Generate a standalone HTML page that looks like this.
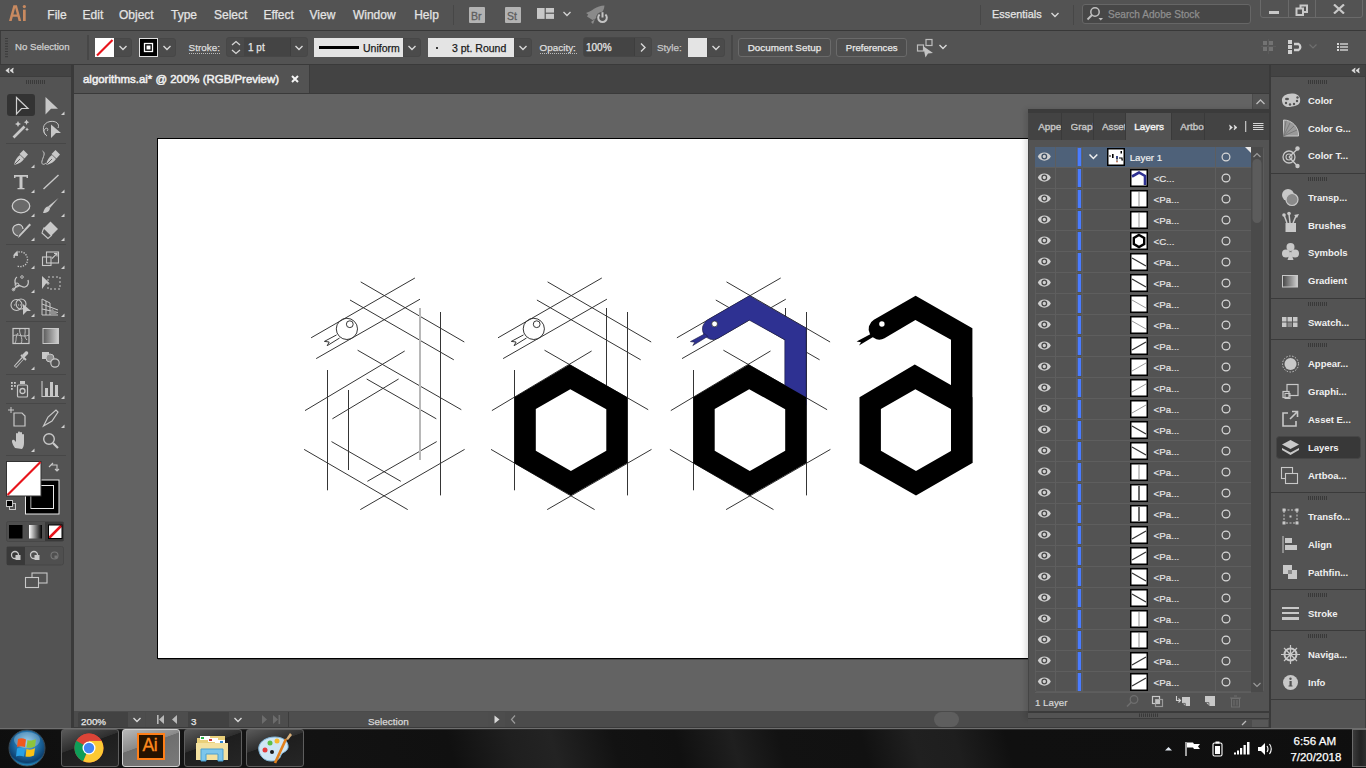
<!DOCTYPE html>
<html><head><meta charset="utf-8">
<style>
*{margin:0;padding:0;box-sizing:border-box}
html,body{width:1366px;height:768px;overflow:hidden;background:#535353;font-family:"Liberation Sans",sans-serif;color:#e0e0e0}
.a{position:absolute}
.t{position:absolute;white-space:nowrap}
</style></head><body>
<div class="a" style="left:0px;top:0px;width:1366px;height:30px;background:#535353;"></div>
<div class="a" style="left:0px;top:30px;width:1366px;height:1px;background:#383838;"></div>
<div class="a" style="left:0px;top:31px;width:1366px;height:33px;background:#535353;"></div>
<div class="a" style="left:0px;top:31px;width:1px;height:697px;background:#3c3c3c;"></div>
<div class="a" style="left:0px;top:64px;width:1366px;height:1px;background:#3a3a3a;"></div>
<div class="a" style="left:0px;top:65px;width:71px;height:663px;background:#535353;"></div>
<div class="a" style="left:0px;top:65px;width:71px;height:11px;background:#434343;"></div>
<div class="a" style="left:0px;top:76px;width:71px;height:1px;background:#3d3d3d;"></div>
<div class="a" style="left:71px;top:65px;width:3px;height:663px;background:#3a3a3a;"></div>
<div class="a" style="left:74px;top:65px;width:1195px;height:28px;background:#434343;"></div>
<div class="a" style="left:74px;top:65px;width:235px;height:28px;background:#535353;"></div>
<div class="a" style="left:309px;top:65px;width:1px;height:28px;background:#3c3c3c;"></div>
<div class="a" style="left:74px;top:93px;width:1195px;height:1px;background:#3a3a3a;"></div>
<div class="a" style="left:74px;top:94px;width:1195px;height:617px;background:#636363;"></div>
<div class="a" style="left:1252px;top:94px;width:17px;height:617px;background:#535353;"></div>
<div class="a" style="left:157px;top:138px;width:873px;height:521px;background:#fff;border:1px solid #000;box-shadow:1px 1px 0 rgba(0,0,0,0.25)"></div>
<svg class="a" style="left:0px;top:0px;" width="1366" height="768" viewBox="0 0 1366 768"><g fill="none" stroke="#353535" stroke-width="1"><path d="M311.1 337.8L414.9 278.0 M316.2 358.6L420.0 299.2 M360.7 281.9L464.3 342.0 M350.0 300.0L453.8 359.8 M440.5 312.0L440.5 495.4 M357.6 350.2L461.3 409.7 M305.0 410.6L404.7 351.0 M327.5 370.0L327.5 490.3 M304.1 449.4L407.7 509.6 M360.3 509.6L464.6 449.4 M366.7 379.0L436.3 418.8 M332.4 418.8L398.6 379.0 M348.5 390.0L348.5 470.0 M331.5 441.6L400.8 481.3 M367.4 481.3L436.7 441.6"/><path d="M420 308V460" stroke="#b8b8b8" stroke-width="2"/><circle cx="346.9" cy="328.9" r="10.6"/><circle cx="349.8" cy="324.2" r="3.4"/><path d="M336.6 334.9 L324.4 341.4 L329.2 342.0 L327.2 345.7 L339.6 338.0"/><path d="M498.0 337.8L601.8 278.0 M503.1 358.6L606.9 299.2 M547.6 281.9L651.2 342.0 M536.9 300.0L640.7 359.8 M627.5 312.0L627.5 495.4 M544.5 350.2L648.2 409.7 M491.9 410.6L591.6 351.0 M514.5 370.0L514.5 490.3 M491.0 449.4L594.6 509.6 M547.2 509.6L651.5 449.4 M606.5 308.0L606.5 390.0"/><circle cx="533.8" cy="328.9" r="10.6"/><circle cx="536.7" cy="324.2" r="3.4"/><path d="M523.5 334.9 L511.3 341.4 L516.1 342.0 L514.1 345.7 L526.5 338.0"/><path d="M676.9 337.8L780.7 278.0 M682.0 358.6L785.8 299.2 M726.5 281.9L830.1 342.0 M715.8 300.0L819.6 359.8 M806.5 312.0L806.5 495.4 M723.4 350.2L827.1 409.7 M670.8 410.6L770.5 351.0 M693.5 370.0L693.5 490.3 M669.9 449.4L773.5 509.6 M726.1 509.6L830.4 449.4 M785.5 308.0L785.5 340.0"/></g><path d="M569.7 364.4 L627.3 397.2 L627.3 462.9 L570.9 495.5 L514.4 463.2 L514.4 397.2ZM570.3 389.2 L606.3 409.3 L606.3 450.7 L570.9 471.1 L535.8 450.7 L535.8 409.0Z" fill="#000" fill-rule="evenodd"/><path d="M707.7 319.8 L749.4 295.8 L806.2 328.2 L806.2 405.0 L784.8 405.0 L784.8 339.7 L749.2 320.1 L718.3 338.2 A10.6 10.6 0 0 1 707.7 319.8Z" fill="#2e3192" stroke="#1a1a40" stroke-width="0.6"/><path d="M705.0 333.7 L690.4 341.6 L694.8 342.2 L692.8 345.6 L707.7 336.4Z" fill="#2e3192" stroke="#1a1a40" stroke-width="0.6"/><circle cx="714.6" cy="323.9" r="2.9" fill="#fff" stroke="#222" stroke-width="0.7"/><path d="M748.6 364.4 L806.2 397.2 L806.2 462.9 L749.8 495.5 L693.3 463.2 L693.3 397.2ZM749.2 389.2 L785.2 409.3 L785.2 450.7 L749.8 471.1 L714.7 450.7 L714.7 409.0Z" fill="#000" fill-rule="evenodd"/><path d="M873.9 319.8 L915.6 295.8 L972.4 328.2 L972.4 462.9 L951.0 462.9 L951.0 339.7 L915.4 320.1 L884.5 338.2 A10.6 10.6 0 0 1 873.9 319.8Z" fill="#000"/><path d="M871.2 333.7 L856.6 341.6 L861.0 342.2 L859.0 345.6 L873.9 336.4Z" fill="#000"/><path d="M914.8 364.4 L972.4 397.2 L972.4 462.9 L916.0 495.5 L859.5 463.2 L859.5 397.2ZM915.4 389.2 L951.4 409.3 L951.4 450.7 L916.0 471.1 L880.9 450.7 L880.9 409.0Z" fill="#000" fill-rule="evenodd"/><circle cx="881.9" cy="324" r="2.7" fill="#fff"/></svg>
<div class="a" style="left:74px;top:711px;width:1195px;height:17px;background:#535353;"></div>
<div class="a" style="left:1269px;top:65px;width:2px;height:663px;background:#3a3a3a;"></div>
<div class="a" style="left:1271px;top:65px;width:95px;height:663px;background:#535353;"></div>
<div class="a" style="left:1271px;top:65px;width:95px;height:11px;background:#434343;"></div>
<div class="a" style="left:1271px;top:76px;width:95px;height:1px;background:#3d3d3d;"></div>
<div class="a" style="left:1365px;top:65px;width:1px;height:663px;background:#3f3f3f;"></div>
<svg class="a" style="left:0px;top:0px;" width="30" height="30" viewBox="0 0 30 30"><path fill-rule="evenodd" d="M9 21 L13.4 5.2 L16.9 5.2 L21.2 21 L18.6 21 L17.5 16.8 L12.8 16.8 L11.7 21Z M13.4 14.5 L16.9 14.5 L15.15 7.8Z" fill="#c98a60"/><rect x="23" y="9.6" width="2.7" height="11.4" fill="#c98a60"/><circle cx="24.35" cy="6.6" r="1.6" fill="#c98a60"/></svg>
<div class="t" style="left:47.3px;top:8.84px;font-size:12px;line-height:12px;color:#e4e4e4;font-weight:normal;-webkit-text-stroke:0.25px #e4e4e4;">File</div>
<div class="t" style="left:82.6px;top:8.84px;font-size:12px;line-height:12px;color:#e4e4e4;font-weight:normal;-webkit-text-stroke:0.25px #e4e4e4;">Edit</div>
<div class="t" style="left:119px;top:8.84px;font-size:12px;line-height:12px;color:#e4e4e4;font-weight:normal;-webkit-text-stroke:0.25px #e4e4e4;">Object</div>
<div class="t" style="left:171px;top:8.84px;font-size:12px;line-height:12px;color:#e4e4e4;font-weight:normal;-webkit-text-stroke:0.25px #e4e4e4;">Type</div>
<div class="t" style="left:214px;top:8.84px;font-size:12px;line-height:12px;color:#e4e4e4;font-weight:normal;-webkit-text-stroke:0.25px #e4e4e4;">Select</div>
<div class="t" style="left:263.4px;top:8.84px;font-size:12px;line-height:12px;color:#e4e4e4;font-weight:normal;-webkit-text-stroke:0.25px #e4e4e4;">Effect</div>
<div class="t" style="left:309.5px;top:8.84px;font-size:12px;line-height:12px;color:#e4e4e4;font-weight:normal;-webkit-text-stroke:0.25px #e4e4e4;">View</div>
<div class="t" style="left:352.9px;top:8.84px;font-size:12px;line-height:12px;color:#e4e4e4;font-weight:normal;-webkit-text-stroke:0.25px #e4e4e4;">Window</div>
<div class="t" style="left:414.2px;top:8.84px;font-size:12px;line-height:12px;color:#e4e4e4;font-weight:normal;-webkit-text-stroke:0.25px #e4e4e4;">Help</div>
<div class="a" style="left:453px;top:5px;width:1px;height:20px;background:#474747;"></div>
<div class="a" style="left:469px;top:7px;width:16px;height:16px;background:#b3b3b3;border-radius:1px"></div>
<div class="t" style="left:471px;top:10.61px;font-size:10.5px;line-height:10.5px;color:#5e5e5e;font-weight:normal;-webkit-text-stroke:0.3px #5e5e5e">Br</div>
<div class="a" style="left:505px;top:7px;width:16px;height:16px;background:#b3b3b3;border-radius:1px"></div>
<div class="t" style="left:507px;top:10.61px;font-size:10.5px;line-height:10.5px;color:#5e5e5e;font-weight:normal;-webkit-text-stroke:0.3px #5e5e5e">St</div>
<svg class="a" style="left:537px;top:8px;" width="18" height="12" viewBox="0 0 18 12"><rect x="0" y="0" width="7.6" height="10.9" fill="#c8c8c8"/><rect x="8.8" y="0" width="8.2" height="4.6" fill="#c8c8c8"/><rect x="8.8" y="5.8" width="8.2" height="5.1" fill="#c8c8c8"/></svg>
<svg class="a" style="left:561.5px;top:10px;" width="10" height="8" viewBox="0 0 10 8"><path d="M1.5 2 L5 5.5 L8.5 2" fill="none" stroke="#d0d0d0" stroke-width="1.4"/></svg>
<svg class="a" style="left:584px;top:2px;" width="26" height="26" viewBox="0 0 26 26"><path d="M3 14.5 C6 8 13 4 20.5 3.5 C20 10 15 15.5 8.5 18 Z" fill="#8a8a8a"/><path d="M2 11 L8 8.5 L5 13Z M7 20 L11 17 L9 22Z" fill="#8a8a8a"/><circle cx="18.5" cy="16" r="6.3" fill="#535353"/><path d="M15.6 12.6 A4.3 4.3 0 1 0 21.4 12.6" fill="none" stroke="#c4c4c4" stroke-width="2"/><path d="M18.5 10.2 V15.5" stroke="#c4c4c4" stroke-width="2"/></svg>
<div class="a" style="left:980px;top:5px;width:1px;height:20px;background:#474747;"></div>
<div class="t" style="left:992px;top:9.27px;font-size:10.9px;line-height:10.9px;color:#e4e4e4;font-weight:normal;-webkit-text-stroke:0.25px #e4e4e4;">Essentials</div>
<svg class="a" style="left:1050px;top:11px;" width="10" height="8" viewBox="0 0 10 8"><path d="M1.5 2 L5 5.5 L8.5 2" fill="none" stroke="#d8d8d8" stroke-width="1.4"/></svg>
<div class="a" style="left:1073px;top:5px;width:1px;height:20px;background:#474747;"></div>
<div class="a" style="left:1082px;top:4px;width:169px;height:20px;background:#474747;border:1px solid #666;border-radius:3px"></div>
<svg class="a" style="left:1086px;top:6px;" width="18" height="16" viewBox="0 0 18 16"><circle cx="9" cy="6" r="4.2" fill="none" stroke="#c0c0c0" stroke-width="1.5"/><path d="M6 9 L1.5 13.5" stroke="#c0c0c0" stroke-width="1.8"/><path d="M12.5 12 L17 12 L14.75 14.5Z" fill="#c0c0c0"/></svg>
<div class="t" style="left:1108px;top:9.75px;font-size:10.1px;line-height:10.1px;color:#8f8f8f;font-weight:normal;-webkit-text-stroke:0.25px #8f8f8f;">Search Adobe Stock</div>
<div class="a" style="left:1260px;top:-3px;width:103px;height:21px;background:transparent;border:1px solid #6a6a6a;border-radius:3px"></div>
<div class="a" style="left:1288px;top:0px;width:1px;height:18px;background:#6a6a6a;"></div>
<div class="a" style="left:1315px;top:0px;width:1px;height:18px;background:#6a6a6a;"></div>
<div class="a" style="left:1269px;top:11px;width:10px;height:3px;background:#c8c8c8;"></div>
<svg class="a" style="left:1295px;top:4px;" width="14" height="12" viewBox="0 0 14 12"><rect x="5.5" y="1.5" width="6.5" height="6.5" fill="none" stroke="#c8c8c8" stroke-width="2"/><rect x="1.5" y="4.5" width="6.5" height="6.5" fill="#535353" stroke="#c8c8c8" stroke-width="2"/></svg>
<svg class="a" style="left:1333px;top:4px;" width="12" height="10" viewBox="0 0 12 10"><path d="M1 0.5 L11 9.5 M11 0.5 L1 9.5" stroke="#c8c8c8" stroke-width="2.2"/></svg>
<svg class="a" style="left:5px;top:38px;" width="4" height="20" viewBox="0 0 4 20"><rect x="0" y="0.0" width="3" height="1" fill="#3a3a3a"/><rect x="0" y="2.6" width="3" height="1" fill="#3a3a3a"/><rect x="0" y="5.2" width="3" height="1" fill="#3a3a3a"/><rect x="0" y="7.800000000000001" width="3" height="1" fill="#3a3a3a"/><rect x="0" y="10.4" width="3" height="1" fill="#3a3a3a"/><rect x="0" y="13.0" width="3" height="1" fill="#3a3a3a"/><rect x="0" y="15.600000000000001" width="3" height="1" fill="#3a3a3a"/><rect x="0" y="18.2" width="3" height="1" fill="#3a3a3a"/></svg>
<div class="t" style="left:15px;top:42.03px;font-size:9.65px;line-height:9.65px;color:#d0d0d0;font-weight:normal;-webkit-text-stroke:0.25px #d0d0d0;">No Selection</div>
<div class="a" style="left:87px;top:35px;width:2px;height:25px;background:#474747;"></div>
<div class="a" style="left:95px;top:38px;width:19px;height:19px;background:#fff;"></div>
<svg class="a" style="left:95px;top:38px;" width="19" height="19" viewBox="0 0 19 19"><path d="M2 17.5 L17.5 2" stroke="#e8141b" stroke-width="2.2"/></svg>
<div class="a" style="left:114px;top:38px;width:18px;height:19px;background:#4b4b4b;border:1px solid #474747;border-radius:0 3px 3px 0"></div>
<svg class="a" style="left:118px;top:43.5px;" width="10" height="8" viewBox="0 0 10 8"><path d="M1.5 2 L5 5.5 L8.5 2" fill="none" stroke="#d8d8d8" stroke-width="1.4"/></svg>
<div class="a" style="left:139px;top:38px;width:19px;height:19px;background:#000;border:1px solid #e0e0e0"></div>
<svg class="a" style="left:139px;top:38px;" width="19" height="19" viewBox="0 0 19 19"><rect x="5.5" y="5.5" width="8" height="8" fill="none" stroke="#fff" stroke-width="1.3"/><rect x="7.5" y="7.5" width="4" height="4" fill="#fff"/></svg>
<div class="a" style="left:158px;top:38px;width:18px;height:19px;background:#4b4b4b;border:1px solid #474747;border-radius:0 3px 3px 0"></div>
<svg class="a" style="left:162px;top:43.5px;" width="10" height="8" viewBox="0 0 10 8"><path d="M1.5 2 L5 5.5 L8.5 2" fill="none" stroke="#d8d8d8" stroke-width="1.4"/></svg>
<div class="t" style="left:188.6px;top:42.62px;font-size:9.9px;line-height:9.9px;color:#dedede;font-weight:normal;-webkit-text-stroke:0.25px #dedede;">Stroke:</div>
<svg class="a" style="left:189px;top:53px;" width="32" height="2" viewBox="0 0 32 2"><rect x="0" y="0" width="1" height="1" fill="#bbbbbb"/><rect x="2" y="0" width="1" height="1" fill="#bbbbbb"/><rect x="4" y="0" width="1" height="1" fill="#bbbbbb"/><rect x="6" y="0" width="1" height="1" fill="#bbbbbb"/><rect x="8" y="0" width="1" height="1" fill="#bbbbbb"/><rect x="10" y="0" width="1" height="1" fill="#bbbbbb"/><rect x="12" y="0" width="1" height="1" fill="#bbbbbb"/><rect x="14" y="0" width="1" height="1" fill="#bbbbbb"/><rect x="16" y="0" width="1" height="1" fill="#bbbbbb"/><rect x="18" y="0" width="1" height="1" fill="#bbbbbb"/><rect x="20" y="0" width="1" height="1" fill="#bbbbbb"/><rect x="22" y="0" width="1" height="1" fill="#bbbbbb"/><rect x="24" y="0" width="1" height="1" fill="#bbbbbb"/><rect x="26" y="0" width="1" height="1" fill="#bbbbbb"/><rect x="28" y="0" width="1" height="1" fill="#bbbbbb"/><rect x="30" y="0" width="1" height="1" fill="#bbbbbb"/></svg>
<div class="a" style="left:226px;top:37px;width:82px;height:20px;background:#4a4a4a;border:1px solid #474747;border-radius:3px"></div>
<svg class="a" style="left:229px;top:39px;" width="14" height="17" viewBox="0 0 14 17"><path d="M3 6 L7 2.5 L11 6 M3 11 L7 14.5 L11 11" fill="none" stroke="#d6d6d6" stroke-width="1.3"/></svg>
<div class="a" style="left:244px;top:38px;width:46px;height:18px;background:#444444;"></div>
<div class="t" style="left:248px;top:42.53px;font-size:10px;line-height:10px;color:#e6e6e6;font-weight:normal;-webkit-text-stroke:0.25px #e6e6e6;">1 pt</div>
<div class="a" style="left:290px;top:38px;width:1px;height:18px;background:#3e3e3e;"></div>
<svg class="a" style="left:294px;top:43.5px;" width="10" height="8" viewBox="0 0 10 8"><path d="M1.5 2 L5 5.5 L8.5 2" fill="none" stroke="#d8d8d8" stroke-width="1.4"/></svg>
<div class="a" style="left:314px;top:38px;width:89px;height:19px;background:#e4e4e4;"></div>
<div class="a" style="left:319px;top:46px;width:40px;height:3px;background:#000;"></div>
<div class="t" style="left:363px;top:42.61px;font-size:10.5px;line-height:10.5px;color:#1a1a1a;font-weight:normal;-webkit-text-stroke:0.25px #1a1a1a;">Uniform</div>
<div class="a" style="left:403px;top:38px;width:18px;height:19px;background:#4b4b4b;border:1px solid #474747;border-radius:0 3px 3px 0"></div>
<svg class="a" style="left:407px;top:43.5px;" width="10" height="8" viewBox="0 0 10 8"><path d="M1.5 2 L5 5.5 L8.5 2" fill="none" stroke="#d8d8d8" stroke-width="1.4"/></svg>
<div class="a" style="left:428px;top:38px;width:86px;height:19px;background:#e4e4e4;"></div>
<div class="a" style="left:436px;top:46.5px;width:2.2px;height:2.2px;background:#000;border-radius:50%"></div>
<div class="t" style="left:452px;top:42.61px;font-size:10.5px;line-height:10.5px;color:#1a1a1a;font-weight:normal;-webkit-text-stroke:0.25px #1a1a1a;">3 pt. Round</div>
<div class="a" style="left:514px;top:38px;width:18px;height:19px;background:#4b4b4b;border:1px solid #474747;border-radius:0 3px 3px 0"></div>
<svg class="a" style="left:518px;top:43.5px;" width="10" height="8" viewBox="0 0 10 8"><path d="M1.5 2 L5 5.5 L8.5 2" fill="none" stroke="#d8d8d8" stroke-width="1.4"/></svg>
<div class="t" style="left:539.6px;top:42.62px;font-size:9.9px;line-height:9.9px;color:#dedede;font-weight:normal;-webkit-text-stroke:0.25px #dedede;">Opacity:</div>
<svg class="a" style="left:540px;top:53px;" width="38" height="2" viewBox="0 0 38 2"><rect x="0" y="0" width="1" height="1" fill="#bbbbbb"/><rect x="2" y="0" width="1" height="1" fill="#bbbbbb"/><rect x="4" y="0" width="1" height="1" fill="#bbbbbb"/><rect x="6" y="0" width="1" height="1" fill="#bbbbbb"/><rect x="8" y="0" width="1" height="1" fill="#bbbbbb"/><rect x="10" y="0" width="1" height="1" fill="#bbbbbb"/><rect x="12" y="0" width="1" height="1" fill="#bbbbbb"/><rect x="14" y="0" width="1" height="1" fill="#bbbbbb"/><rect x="16" y="0" width="1" height="1" fill="#bbbbbb"/><rect x="18" y="0" width="1" height="1" fill="#bbbbbb"/><rect x="20" y="0" width="1" height="1" fill="#bbbbbb"/><rect x="22" y="0" width="1" height="1" fill="#bbbbbb"/><rect x="24" y="0" width="1" height="1" fill="#bbbbbb"/><rect x="26" y="0" width="1" height="1" fill="#bbbbbb"/><rect x="28" y="0" width="1" height="1" fill="#bbbbbb"/><rect x="30" y="0" width="1" height="1" fill="#bbbbbb"/><rect x="32" y="0" width="1" height="1" fill="#bbbbbb"/><rect x="34" y="0" width="1" height="1" fill="#bbbbbb"/><rect x="36" y="0" width="1" height="1" fill="#bbbbbb"/></svg>
<div class="a" style="left:583px;top:37px;width:69px;height:20px;background:#4a4a4a;border:1px solid #474747;border-radius:3px"></div>
<div class="a" style="left:584px;top:38px;width:50px;height:18px;background:#444444;"></div>
<div class="t" style="left:586px;top:42.53px;font-size:10px;line-height:10px;color:#e6e6e6;font-weight:normal;-webkit-text-stroke:0.25px #e6e6e6;">100%</div>
<div class="a" style="left:634px;top:38px;width:1px;height:18px;background:#3e3e3e;"></div>
<svg class="a" style="left:638px;top:42px;" width="10" height="11" viewBox="0 0 10 11"><path d="M3 1.5 L7 5.5 L3 9.5" fill="none" stroke="#d8d8d8" stroke-width="1.4"/></svg>
<div class="t" style="left:657px;top:42.62px;font-size:9.9px;line-height:9.9px;color:#c8c8c8;font-weight:normal;-webkit-text-stroke:0.25px #c8c8c8;">Style:</div>
<div class="a" style="left:688px;top:38px;width:19px;height:19px;background:#e4e4e4;"></div>
<div class="a" style="left:707px;top:38px;width:18px;height:19px;background:#4b4b4b;border:1px solid #474747;border-radius:0 3px 3px 0"></div>
<svg class="a" style="left:711px;top:43.5px;" width="10" height="8" viewBox="0 0 10 8"><path d="M1.5 2 L5 5.5 L8.5 2" fill="none" stroke="#d8d8d8" stroke-width="1.4"/></svg>
<div class="a" style="left:731px;top:35px;width:2px;height:25px;background:#474747;"></div>
<div class="a" style="left:738px;top:38px;width:93px;height:19px;background:#4e4e4e;border:1px solid #6a6a6a;border-radius:3px"></div>
<div class="t" style="left:747.7px;top:43.15px;font-size:9.87px;line-height:9.87px;color:#e8e8e8;font-weight:normal;-webkit-text-stroke:0.25px #e8e8e8;">Document Setup</div>
<div class="a" style="left:836px;top:38px;width:71px;height:19px;background:#4e4e4e;border:1px solid #6a6a6a;border-radius:3px"></div>
<div class="t" style="left:845.8px;top:43.37px;font-size:9.6px;line-height:9.6px;color:#e8e8e8;font-weight:normal;-webkit-text-stroke:0.25px #e8e8e8;">Preferences</div>
<svg class="a" style="left:916px;top:38px;" width="20" height="20" viewBox="0 0 20 20"><rect x="1.5" y="7" width="6" height="6" fill="none" stroke="#bdbdbd" stroke-width="1.2"/><rect x="10" y="1.5" width="6" height="6" fill="none" stroke="#bdbdbd" stroke-width="1.2"/><path d="M7 8 L17 15 L12 15.5 L9.5 19.5 Z" fill="#c4c4c4"/></svg>
<svg class="a" style="left:938px;top:43px;" width="10" height="8" viewBox="0 0 10 8"><path d="M1.5 2 L5 5.5 L8.5 2" fill="none" stroke="#d8d8d8" stroke-width="1.4"/></svg>
<svg class="a" style="left:1260px;top:38px;" width="18" height="18" viewBox="0 0 18 18"><g fill="#737373"><rect x="3" y="3" width="4" height="4"/><rect x="9" y="3" width="4" height="4"/><rect x="3" y="9" width="4" height="4"/><rect x="9" y="9" width="4" height="4"/></g><path d="M8.5 1V16 M1 8.5H16" stroke="#5e5e5e" stroke-width="0.8"/></svg>
<svg class="a" style="left:1286px;top:38px;" width="20" height="18" viewBox="0 0 20 18"><g fill="#d0d0d0"><rect x="2" y="2" width="4" height="4"/><rect x="2" y="7" width="4" height="4"/><rect x="2" y="12" width="4" height="4"/></g><path d="M8 6 H12.5 A3.4 3.4 0 0 1 12.5 12 H8" fill="none" stroke="#d0d0d0" stroke-width="2.4"/></svg>
<svg class="a" style="left:1308px;top:42px;" width="10" height="8" viewBox="0 0 10 8"><path d="M1.5 2.5 L5 6 L8.5 2.5" fill="none" stroke="#6f6f6f" stroke-width="1.2"/></svg>
<svg class="a" style="left:1335px;top:41px;" width="16" height="12" viewBox="0 0 16 12"><g fill="#d6d6d6"><rect x="2" y="2" width="2" height="2"/><rect x="5" y="2.3" width="8" height="1.4"/><rect x="2" y="5" width="2" height="2"/><rect x="5" y="5.3" width="8" height="1.4"/><rect x="2" y="8" width="2" height="2"/><rect x="5" y="8.3" width="8" height="1.4"/></g></svg>
<svg class="a" style="left:0px;top:0px;" width="72" height="600" viewBox="0 0 72 600"><path d="M9.2 68 L5.8 70.5 L9.2 73 L8.6 70.5Z M13.3 68 L9.9 70.5 L13.3 73 L12.7 70.5Z" fill="#e0e0e0" stroke="#e0e0e0" stroke-width="0.6" stroke-linejoin="round"/><rect x="26" y="80" width="1" height="4" fill="#3a3a3a"/><rect x="28" y="80" width="1" height="4" fill="#3a3a3a"/><rect x="30" y="80" width="1" height="4" fill="#3a3a3a"/><rect x="32" y="80" width="1" height="4" fill="#3a3a3a"/><rect x="34" y="80" width="1" height="4" fill="#3a3a3a"/><rect x="36" y="80" width="1" height="4" fill="#3a3a3a"/><rect x="38" y="80" width="1" height="4" fill="#3a3a3a"/><rect x="40" y="80" width="1" height="4" fill="#3a3a3a"/><rect x="42" y="80" width="1" height="4" fill="#3a3a3a"/><rect x="44" y="80" width="1" height="4" fill="#3a3a3a"/><rect x="7" y="94" width="28" height="22" rx="3" fill="#333333"/><path d="M16.5 97.5 L28 108.5 L21.5 108.5 L16.5 114 Z" fill="none" stroke="#d0d0d0" stroke-width="1.2"/><path d="M45.5 97 L58 108.7 L51 108.7 L45.5 114.5 Z" fill="#c8c8c8"/><path d="M61 115 L64.5 115 L64.5 111.5Z" fill="#d0d0d0"/><path d="M13.5 137.5 L24.5 126.5" stroke="#c8c8c8" stroke-width="2.6"/><path d="M18 121 l1 2 l2 1 l-2 1 l-1 2 l-1 -2 l-2 -1 l2 -1z M26.5 119.5 l0.9 1.8 l1.8 0.9 l-1.8 0.9 l-0.9 1.8 l-0.9 -1.8 l-1.8 -0.9 l1.8 -0.9z M27 127.5 l0.7 1.2 l1.2 0.7 l-1.2 0.7 l-0.7 1.2 l-0.7 -1.2 l-1.2 -0.7 l1.2 -0.7z" fill="#c8c8c8"/><path d="M46 135 C42 131 42 123 50 121.5 C56 120.5 60 124 58 128 M47 136 C44 134 43 131 45 129 C47 127 49 129 47 131" fill="none" stroke="#c8c8c8" stroke-width="1"/><path d="M51 124.5 L61 133 L56 133 L51 138 Z" fill="#c8c8c8"/><rect x="6" y="143" width="60" height="1" fill="#474747"/><g transform="translate(21,158)"><path d="M-7 7 C-6 2 -4 -1 -1 -3 L3 1 C1 4 -2 6 -7 7Z" fill="#c8c8c8"/><path d="M-1.5 -4 L2.5 -8 L7 -3.5 L3.5 0.5Z" fill="#c8c8c8"/><path d="M-6.5 6.5 L-1 1" stroke="#535353" stroke-width="0.9"/></g><path d="M31 168 L34.5 168 L34.5 164.5Z" fill="#d0d0d0"/><g transform="translate(53,158)"><path d="M-7 7 C-6 2 -4 -1 -1 -3 L3 1 C1 4 -2 6 -7 7Z" fill="#c8c8c8"/><path d="M-1.5 -4 L2.5 -8 L7 -3.5 L3.5 0.5Z" fill="#c8c8c8"/><path d="M-6.5 6.5 L-1 1" stroke="#535353" stroke-width="0.9"/></g><path d="M42.5 151 C46 153 43 157 42 161 C41 165 44 165 46 163" fill="none" stroke="#c8c8c8" stroke-width="1"/><path d="M14 175 H28 V178 H26.5 V176.8 H22.5 V188 H24.5 V189.2 H17.5 V188 H19.5 V176.8 H15.5 V178 H14Z" fill="#c8c8c8"/><path d="M31 193 L34.5 193 L34.5 189.5Z" fill="#d0d0d0"/><path d="M43.5 189 L58.5 175" stroke="#c8c8c8" stroke-width="1.4"/><path d="M61 193 L64.5 193 L64.5 189.5Z" fill="#d0d0d0"/><ellipse cx="21" cy="206" rx="8.8" ry="6.8" fill="#6a6a6a" stroke="#d0d0d0" stroke-width="1.2"/><path d="M31 217 L34.5 217 L34.5 213.5Z" fill="#d0d0d0"/><path d="M58.5 198 L50 208 L48 206.5Z" fill="#c8c8c8"/><path d="M43 213 C44 210 45 207 48 206.5 L50 208 C50 211 47 213 43 213Z" fill="#c8c8c8"/><path d="M61 217 L64.5 217 L64.5 213.5Z" fill="#d0d0d0"/><path d="M18 236 C12 234 11 227 16 225 C20 223 23 226 23 229" fill="#6a6a6a" stroke="#d0d0d0" stroke-width="1.2"/><path d="M31 225 L20 236.5 L18 238 L19 235 L29.5 223.5Z" fill="#c8c8c8"/><path d="M31 241 L34.5 241 L34.5 237.5Z" fill="#d0d0d0"/><path d="M50.5 221.5 L58 229 L51.5 235.5 L44 228Z" fill="#c8c8c8"/><path d="M44 228 L51.5 235.5 L48 238.5 L42 233 L43 230Z" fill="none" stroke="#c8c8c8" stroke-width="1.1"/><path d="M61 241 L64.5 241 L64.5 237.5Z" fill="#d0d0d0"/><rect x="6" y="244" width="60" height="1" fill="#474747"/><path d="M16 253 C21 250 27 253 27.5 259 C28 265 22 268 17 266" fill="none" stroke="#c8c8c8" stroke-width="1.3" stroke-dasharray="1.3 1.3"/><path d="M13 255.5 L17.5 250.5 L18 256Z" fill="#c8c8c8"/><path d="M14 258 C14 256 15 254 16 253" stroke="#c8c8c8" stroke-width="1.3" fill="none"/><path d="M31 269 L34.5 269 L34.5 265.5Z" fill="#d0d0d0"/><rect x="42.5" y="257" width="8.5" height="8.5" fill="none" stroke="#c8c8c8" stroke-width="1.1"/><rect x="46.5" y="252" width="12" height="11" fill="none" stroke="#c8c8c8" stroke-width="1.1"/><path d="M52 258.5 L57 253.5 M54 253.5 H57 V256.5" fill="none" stroke="#c8c8c8" stroke-width="1.1"/><path d="M61 269 L64.5 269 L64.5 265.5Z" fill="#d0d0d0"/><path d="M13 290 L17 286 C20 284 22 288 25 287 C28 286 29 283 28 280 M16 285 C14 282 15 278 17 277" fill="none" stroke="#c8c8c8" stroke-width="1.3"/><circle cx="17" cy="285" r="2" fill="none" stroke="#c8c8c8" stroke-width="1"/><circle cx="13.5" cy="289.5" r="1.3" fill="none" stroke="#c8c8c8" stroke-width="0.9"/><circle cx="22" cy="277" r="1.3" fill="none" stroke="#c8c8c8" stroke-width="0.9"/><path d="M31 293 L34.5 293 L34.5 289.5Z" fill="#d0d0d0"/><path d="M42 276 L50 283.5 L46 283.5 L42 289Z" fill="#c8c8c8"/><rect x="48" y="277" width="12" height="12" fill="none" stroke="#c8c8c8" stroke-width="1" stroke-dasharray="2 2"/><circle cx="16.5" cy="305" r="5.5" fill="none" stroke="#c8c8c8" stroke-width="1.1"/><circle cx="21" cy="304" r="5" fill="none" stroke="#c8c8c8" stroke-width="1.1"/><path d="M14 305 H22" stroke="#c8c8c8" stroke-width="1" stroke-dasharray="1 1"/><path d="M23 304 L31 311 L27 311 L23 315Z" fill="#c8c8c8"/><path d="M31 317 L34.5 317 L34.5 313.5Z" fill="#d0d0d0"/><path d="M42 299 V315 L58 315 M42 299 L50 303 V315 M42 304 L58 310 M42 309 L58 312.5 M46 301 V315" fill="none" stroke="#c8c8c8" stroke-width="1"/><path d="M52 308 L57 314 H50Z" fill="#8f8f8f"/><path d="M61 317 L64.5 317 L64.5 313.5Z" fill="#d0d0d0"/><rect x="6" y="321" width="60" height="1" fill="#474747"/><rect x="13" y="328.5" width="16" height="15" fill="none" stroke="#c8c8c8" stroke-width="1.2"/><path d="M13 336 C18 333 22 338 29 335 M20 328.5 C18 333 24 338 21 343.5 M15 343 C17 340 15 337 18 333 M25 329 C26 333 23 336 27 340" fill="none" stroke="#c8c8c8" stroke-width="0.9"/><defs><linearGradient id="gg" x1="0" x2="1"><stop offset="0" stop-color="#5a5a5a"/><stop offset="1" stop-color="#d0d0d0"/></linearGradient></defs><rect x="43" y="328.5" width="15.5" height="15" fill="url(#gg)" stroke="#c8c8c8" stroke-width="1"/><path d="M15 367 L23 358" stroke="#c8c8c8" stroke-width="3.2"/><path d="M15.5 366.5 L23 358.5" stroke="#535353" stroke-width="1.2"/><path d="M22 355 L25.5 351.5 C27 350.5 29 352 28 354 L24.5 357.5Z" fill="#c8c8c8"/><path d="M21 355 L26 360" stroke="#c8c8c8" stroke-width="1.8"/><path d="M31 370 L34.5 370 L34.5 366.5Z" fill="#d0d0d0"/><rect x="42" y="352" width="7" height="7" fill="#c8c8c8"/><circle cx="50" cy="358" r="4" fill="#8f8f8f" stroke="#c8c8c8" stroke-width="1"/><circle cx="55" cy="363" r="4.2" fill="#535353" stroke="#c8c8c8" stroke-width="1.2"/><rect x="6" y="374" width="60" height="1" fill="#474747"/><g fill="#c8c8c8"><rect x="11" y="382" width="1.8" height="1.8"/><rect x="14" y="382" width="1.8" height="1.8"/><rect x="11" y="385" width="1.8" height="1.8"/><rect x="14" y="385" width="1.8" height="1.8"/><rect x="11" y="388" width="1.8" height="1.8"/><rect x="20" y="381" width="5" height="3"/></g><rect x="17.5" y="385" width="10" height="12" rx="1" fill="none" stroke="#c8c8c8" stroke-width="1.2"/><circle cx="22.5" cy="391" r="2.5" fill="none" stroke="#c8c8c8" stroke-width="1.3"/><path d="M31 399 L34.5 399 L34.5 395.5Z" fill="#d0d0d0"/><path d="M42 381 V396.5 H59" fill="none" stroke="#c8c8c8" stroke-width="1.1"/><g fill="#c8c8c8"><rect x="45" y="388" width="3" height="8"/><rect x="50" y="382" width="3" height="14"/><rect x="55" y="385" width="3" height="11"/></g><path d="M61 399 L64.5 399 L64.5 395.5Z" fill="#d0d0d0"/><rect x="6" y="403" width="60" height="1" fill="#474747"/><path d="M8 410 H14 M11 407 V413" stroke="#c8c8c8" stroke-width="1"/><path d="M14 413 H22 L25 416 V426 H14Z" fill="none" stroke="#c8c8c8" stroke-width="1.2"/><path d="M43.5 426 L48 417 L56 410 L58 412 L52 421Z" fill="none" stroke="#c8c8c8" stroke-width="1.2"/><path d="M61 428 L64.5 428 L64.5 424.5Z" fill="#d0d0d0"/><path d="M15 448 C13 445 11 441 12.5 440 C14 439 15 441 16 442 V434 C16 432.5 18 432.5 18 434 V440 V432.5 C18 431 20 431 20 432.5 V440 V433 C20 431.5 22 431.5 22 433 V440 V435 C22 433.5 24 433.5 24 435 V443 C24 446 23 448 22 449Z" fill="#c8c8c8"/><path d="M31 452 L34.5 452 L34.5 448.5Z" fill="#d0d0d0"/><circle cx="49" cy="439" r="5.3" fill="none" stroke="#c8c8c8" stroke-width="1.4"/><path d="M53 443 L58 448" stroke="#c8c8c8" stroke-width="2.2"/><rect x="6" y="455" width="60" height="1" fill="#474747"/><rect x="25.5" y="480" width="33.5" height="34" fill="#000" stroke="#e8e8e8" stroke-width="1"/><rect x="31" y="485.5" width="22.5" height="23" fill="none" stroke="#e8e8e8" stroke-width="1"/><rect x="32" y="486.5" width="20.5" height="21" fill="none" stroke="#000" stroke-width="1"/><rect x="6.5" y="461.5" width="34.5" height="34.5" fill="#fff" stroke="#333" stroke-width="1"/><path d="M7.5 495 L40.5 462" stroke="#e8141b" stroke-width="2.2"/><path d="M51 465 H57 V471 M49 467 L51 465 L53 463 M55 469 L57 471 L59 469" fill="none" stroke="#c8c8c8" stroke-width="1.1"/><rect x="9.5" y="503.5" width="6" height="6" fill="#535353" stroke="#c8c8c8" stroke-width="1"/><rect x="6.5" y="500.5" width="6" height="6" fill="#000" stroke="#c8c8c8" stroke-width="1"/><rect x="6.5" y="521.5" width="57" height="20" rx="2" fill="#4f4f4f" stroke="#474747" stroke-width="1"/><rect x="45" y="522" width="18.5" height="19" fill="#393939"/><rect x="9" y="525" width="13.5" height="13.5" fill="#000"/><rect x="29" y="525" width="13" height="13.5" fill="url(#gg2)"/><defs><linearGradient id="gg2" x1="0" x2="1"><stop offset="0" stop-color="#fff"/><stop offset="1" stop-color="#000"/></linearGradient></defs><rect x="48.5" y="525" width="13.5" height="13.5" fill="#fff"/><path d="M49 538 L61.5 525.5" stroke="#e8141b" stroke-width="2.5"/><rect x="48.5" y="525" width="13.5" height="13.5" fill="none" stroke="#000" stroke-width="1"/><rect x="6.5" y="546.5" width="57" height="18.5" rx="2" fill="#4f4f4f" stroke="#474747" stroke-width="1"/><rect x="7" y="547" width="18" height="18" fill="#393939"/><circle cx="15" cy="555" r="3.5" fill="none" stroke="#c8c8c8" stroke-width="1.3"/><rect x="15.5" y="555" width="5" height="5" fill="#c8c8c8"/><circle cx="34" cy="555" r="3.5" fill="none" stroke="#c8c8c8" stroke-width="1.3"/><rect x="34.5" y="555" width="5" height="5" fill="#c8c8c8"/><circle cx="54.5" cy="555.5" r="3.5" fill="none" stroke="#777" stroke-width="1.1"/><path d="M54.5 555.5 h3 v3 h-3z" fill="#777"/><rect x="32" y="573" width="15" height="10" fill="#535353" stroke="#c8c8c8" stroke-width="1.1"/><rect x="25.5" y="577.5" width="13" height="10" fill="#535353" stroke="#c8c8c8" stroke-width="1.1"/></svg>
<div class="t" style="left:83px;top:74.32px;font-size:11.44px;line-height:11.44px;color:#f0f0f0;font-weight:normal;-webkit-text-stroke:0.5px #f0f0f0">algorithms.ai* @ 200% (RGB/Preview)</div>
<svg class="a" style="left:291px;top:75px;" width="8" height="8" viewBox="0 0 8 8"><path d="M1 1 L7 7 M7 1 L1 7" stroke="#f4f4f4" stroke-width="2"/></svg>
<svg class="a" style="left:1253px;top:94px;" width="15" height="15" viewBox="0 0 15 15"><path d="M3.5 10 L7.5 6 L11.5 10" fill="none" stroke="#bdbdbd" stroke-width="1.3"/></svg>
<div class="a" style="left:1252px;top:94px;width:1px;height:617px;background:#4a4a4a;"></div>
<div class="a" style="left:74px;top:711px;width:1195px;height:16px;background:#4b4b4b;"></div>
<div class="a" style="left:74px;top:727px;width:1195px;height:1px;background:#3a3a3a;"></div>
<div class="a" style="left:78px;top:712px;width:50px;height:15px;background:#424242;border-radius:2px 0 0 0"></div>
<div class="t" style="left:81px;top:716.90px;font-size:9.8px;line-height:9.8px;color:#e8e8e8;font-weight:normal;-webkit-text-stroke:0.25px #e8e8e8;">200%</div>
<div class="a" style="left:128px;top:712px;width:17px;height:15px;background:#4d4d4d;"></div>
<svg class="a" style="left:131.5px;top:716px;" width="10" height="8" viewBox="0 0 10 8"><path d="M1.5 2 L5 5.5 L8.5 2" fill="none" stroke="#d8d8d8" stroke-width="1.4"/></svg>
<div class="a" style="left:146px;top:712px;width:42px;height:15px;background:#4d4d4d;"></div>
<svg class="a" style="left:146px;top:712px;" width="42" height="15" viewBox="0 0 42 15"><rect x="11" y="3" width="1.6" height="9" fill="#b8b8b8"/><path d="M13 7.5 L18 3 V12Z" fill="#b8b8b8"/><path d="M26 7.5 L31 3 V12Z" fill="#b8b8b8"/></svg>
<div class="a" style="left:188px;top:712px;width:41px;height:15px;background:#424242;"></div>
<div class="t" style="left:191px;top:716.90px;font-size:9.8px;line-height:9.8px;color:#e8e8e8;font-weight:normal;-webkit-text-stroke:0.25px #e8e8e8;">3</div>
<div class="a" style="left:229px;top:712px;width:17px;height:15px;background:#4d4d4d;"></div>
<svg class="a" style="left:232.5px;top:716px;" width="10" height="8" viewBox="0 0 10 8"><path d="M1.5 2 L5 5.5 L8.5 2" fill="none" stroke="#d8d8d8" stroke-width="1.4"/></svg>
<div class="a" style="left:246px;top:712px;width:42px;height:15px;background:#4d4d4d;"></div>
<svg class="a" style="left:246px;top:712px;" width="42" height="15" viewBox="0 0 42 15"><path d="M16 3 L21 7.5 L16 12Z" fill="#6c6c6c"/><path d="M27 3 L32 7.5 L27 12Z" fill="#6c6c6c"/><rect x="32.5" y="3" width="1.6" height="9" fill="#6c6c6c"/></svg>
<div class="a" style="left:288px;top:712px;width:1px;height:15px;background:#3c3c3c;"></div>
<div class="a" style="left:289px;top:712px;width:199px;height:15px;background:#4e4e4e;"></div>
<div class="t" style="left:368px;top:716.82px;font-size:9.9px;line-height:9.9px;color:#d8d8d8;font-weight:normal;-webkit-text-stroke:0.25px #d8d8d8;">Selection</div>
<div class="a" style="left:488px;top:712px;width:17px;height:15px;background:#4d4d4d;"></div>
<svg class="a" style="left:488px;top:712px;" width="17" height="15" viewBox="0 0 17 15"><path d="M6.5 3.5 L11.5 7.5 L6.5 11.5Z" fill="#d8d8d8"/></svg>
<svg class="a" style="left:508px;top:712px;" width="10" height="15" viewBox="0 0 10 15"><path d="M7 3.5 L3.5 7.5 L7 11.5" fill="none" stroke="#9a9a9a" stroke-width="1.2"/></svg>
<div class="a" style="left:934px;top:712px;width:25px;height:15px;background:#5e5e5e;border-radius:8px"></div>
<svg class="a" style="left:0px;top:0px;" width="1366" height="768" viewBox="0 0 1366 768"><path d="M1355.2 68 L1351.8 70.5 L1355.2 73 L1354.6 70.5Z M1359.3 68 L1355.9 70.5 L1359.3 73 L1358.7 70.5Z" fill="#e0e0e0" stroke="#e0e0e0" stroke-width="0.6" stroke-linejoin="round"/><rect x="1308" y="80" width="1" height="4" fill="#393939"/><rect x="1310" y="80" width="1" height="4" fill="#393939"/><rect x="1312" y="80" width="1" height="4" fill="#393939"/><rect x="1314" y="80" width="1" height="4" fill="#393939"/><rect x="1316" y="80" width="1" height="4" fill="#393939"/><rect x="1318" y="80" width="1" height="4" fill="#393939"/><rect x="1320" y="80" width="1" height="4" fill="#393939"/><rect x="1322" y="80" width="1" height="4" fill="#393939"/><rect x="1324" y="80" width="1" height="4" fill="#393939"/><rect x="1326" y="80" width="1" height="4" fill="#393939"/><rect x="1271" y="173" width="94" height="1" fill="#3a3a3a"/><rect x="1308" y="177" width="1" height="4" fill="#393939"/><rect x="1310" y="177" width="1" height="4" fill="#393939"/><rect x="1312" y="177" width="1" height="4" fill="#393939"/><rect x="1314" y="177" width="1" height="4" fill="#393939"/><rect x="1316" y="177" width="1" height="4" fill="#393939"/><rect x="1318" y="177" width="1" height="4" fill="#393939"/><rect x="1320" y="177" width="1" height="4" fill="#393939"/><rect x="1322" y="177" width="1" height="4" fill="#393939"/><rect x="1324" y="177" width="1" height="4" fill="#393939"/><rect x="1326" y="177" width="1" height="4" fill="#393939"/><rect x="1271" y="298" width="94" height="1" fill="#3a3a3a"/><rect x="1308" y="302" width="1" height="4" fill="#393939"/><rect x="1310" y="302" width="1" height="4" fill="#393939"/><rect x="1312" y="302" width="1" height="4" fill="#393939"/><rect x="1314" y="302" width="1" height="4" fill="#393939"/><rect x="1316" y="302" width="1" height="4" fill="#393939"/><rect x="1318" y="302" width="1" height="4" fill="#393939"/><rect x="1320" y="302" width="1" height="4" fill="#393939"/><rect x="1322" y="302" width="1" height="4" fill="#393939"/><rect x="1324" y="302" width="1" height="4" fill="#393939"/><rect x="1326" y="302" width="1" height="4" fill="#393939"/><rect x="1271" y="339" width="94" height="1" fill="#3a3a3a"/><rect x="1308" y="343" width="1" height="4" fill="#393939"/><rect x="1310" y="343" width="1" height="4" fill="#393939"/><rect x="1312" y="343" width="1" height="4" fill="#393939"/><rect x="1314" y="343" width="1" height="4" fill="#393939"/><rect x="1316" y="343" width="1" height="4" fill="#393939"/><rect x="1318" y="343" width="1" height="4" fill="#393939"/><rect x="1320" y="343" width="1" height="4" fill="#393939"/><rect x="1322" y="343" width="1" height="4" fill="#393939"/><rect x="1324" y="343" width="1" height="4" fill="#393939"/><rect x="1326" y="343" width="1" height="4" fill="#393939"/><rect x="1271" y="492" width="94" height="1" fill="#3a3a3a"/><rect x="1308" y="496" width="1" height="4" fill="#393939"/><rect x="1310" y="496" width="1" height="4" fill="#393939"/><rect x="1312" y="496" width="1" height="4" fill="#393939"/><rect x="1314" y="496" width="1" height="4" fill="#393939"/><rect x="1316" y="496" width="1" height="4" fill="#393939"/><rect x="1318" y="496" width="1" height="4" fill="#393939"/><rect x="1320" y="496" width="1" height="4" fill="#393939"/><rect x="1322" y="496" width="1" height="4" fill="#393939"/><rect x="1324" y="496" width="1" height="4" fill="#393939"/><rect x="1326" y="496" width="1" height="4" fill="#393939"/><rect x="1271" y="589" width="94" height="1" fill="#3a3a3a"/><rect x="1308" y="593" width="1" height="4" fill="#393939"/><rect x="1310" y="593" width="1" height="4" fill="#393939"/><rect x="1312" y="593" width="1" height="4" fill="#393939"/><rect x="1314" y="593" width="1" height="4" fill="#393939"/><rect x="1316" y="593" width="1" height="4" fill="#393939"/><rect x="1318" y="593" width="1" height="4" fill="#393939"/><rect x="1320" y="593" width="1" height="4" fill="#393939"/><rect x="1322" y="593" width="1" height="4" fill="#393939"/><rect x="1324" y="593" width="1" height="4" fill="#393939"/><rect x="1326" y="593" width="1" height="4" fill="#393939"/><rect x="1271" y="630" width="94" height="1" fill="#3a3a3a"/><rect x="1308" y="634" width="1" height="4" fill="#393939"/><rect x="1310" y="634" width="1" height="4" fill="#393939"/><rect x="1312" y="634" width="1" height="4" fill="#393939"/><rect x="1314" y="634" width="1" height="4" fill="#393939"/><rect x="1316" y="634" width="1" height="4" fill="#393939"/><rect x="1318" y="634" width="1" height="4" fill="#393939"/><rect x="1320" y="634" width="1" height="4" fill="#393939"/><rect x="1322" y="634" width="1" height="4" fill="#393939"/><rect x="1324" y="634" width="1" height="4" fill="#393939"/><rect x="1326" y="634" width="1" height="4" fill="#393939"/><rect x="1271" y="699" width="94" height="1" fill="#3a3a3a"/><rect x="1276.5" y="436.5" width="84" height="22" rx="3" fill="#383838" stroke="#464646" stroke-width="1"/><path d="M1282 101 C1281 96 1287 93 1293 93.5 C1299 94 1301 98 1300 102 C1299 105 1296 106 1290 107 C1284 107.5 1282.5 104 1282 101Z" fill="#c8c8c8"/><circle cx="1286" cy="103" r="1.2" fill="#535353"/><circle cx="1290" cy="104.5" r="1.2" fill="#535353"/><circle cx="1294" cy="104" r="1.2" fill="#535353"/><circle cx="1297" cy="101" r="1.2" fill="#535353"/><circle cx="1297.5" cy="97.5" r="1.2" fill="#535353"/><ellipse cx="1287" cy="99" rx="2" ry="1.3" fill="#535353"/><path d="M1283.5 120 A15 15 0 0 1 1298.5 136 L1283.5 136Z" fill="#9a9a9a" stroke="#c8c8c8" stroke-width="1"/><path d="M1283.5 136 L1286 121 M1283.5 136 L1290 123 M1283.5 136 L1294 126 M1283.5 136 L1297 130" stroke="#7a7a7a" stroke-width="1"/><circle cx="1289" cy="157" r="6" fill="none" stroke="#c8c8c8" stroke-width="1.3"/><circle cx="1289" cy="157" r="3" fill="none" stroke="#c8c8c8" stroke-width="1.1"/><path d="M1289 157 L1297.5 149 M1289 157 L1297.5 166" stroke="#c8c8c8" stroke-width="1.3"/><circle cx="1297.5" cy="148.5" r="2.2" fill="#c8c8c8"/><circle cx="1297.5" cy="166" r="2.2" fill="#c8c8c8"/><circle cx="1288" cy="195" r="6" fill="#c8c8c8"/><circle cx="1292" cy="199.5" r="6" fill="#8a8a8a" stroke="#c8c8c8" stroke-width="1.2"/><path d="M1285.5 223 H1296 V232 H1285.5Z" fill="#c8c8c8"/><path d="M1287 223 L1284 215 M1290 223 L1289 214 M1293 223 L1296 216" stroke="#c8c8c8" stroke-width="1.5"/><circle cx="1284" cy="215" r="1.8" fill="#c8c8c8"/><circle cx="1289" cy="213.5" r="1.8" fill="#c8c8c8"/><path d="M1294 215 L1299 214 L1297 218Z" fill="#c8c8c8"/><circle cx="1290.5" cy="247" r="4" fill="#c8c8c8"/><circle cx="1286" cy="253.5" r="4" fill="#c8c8c8"/><circle cx="1295" cy="253.5" r="4" fill="#c8c8c8"/><path d="M1290.5 251 L1293.5 260 H1287.5Z" fill="#c8c8c8"/><defs><linearGradient id="dg" x1="0" x2="1"><stop offset="0" stop-color="#444"/><stop offset="1" stop-color="#d0d0d0"/></linearGradient></defs><rect x="1282.5" y="275.5" width="15" height="11.5" fill="url(#dg)" stroke="#c8c8c8" stroke-width="1"/><g fill="#c8c8c8"><rect x="1282" y="317" width="4.5" height="4.5"/><rect x="1287.5" y="317" width="4.5" height="4.5"/><rect x="1293" y="317" width="4.5" height="4.5"/><rect x="1282" y="322.5" width="4.5" height="4.5"/><rect x="1293" y="322.5" width="4.5" height="4.5"/></g><rect x="1287.5" y="322.5" width="4.5" height="4.5" fill="#8a8a8a"/><circle cx="1290.5" cy="364" r="6" fill="#c8c8c8"/><circle cx="1290.5" cy="364" r="8" fill="none" stroke="#c8c8c8" stroke-width="1" stroke-dasharray="1.5 1.5"/><rect x="1287" y="384.5" width="11" height="11" fill="none" stroke="#c8c8c8" stroke-width="1.2"/><rect x="1283" y="391.5" width="6" height="6" fill="#535353" stroke="#c8c8c8" stroke-width="1.2"/><rect x="1285" y="393.5" width="5" height="5" fill="none" stroke="#c8c8c8" stroke-width="1"/><path d="M1288 413 H1283 V426 H1296 V421" fill="none" stroke="#c8c8c8" stroke-width="1.6"/><path d="M1290 419 L1297 412 M1292 411.5 H1297.5 V417" fill="none" stroke="#c8c8c8" stroke-width="1.6"/><path d="M1290.5 440 L1299 444.5 L1290.5 449 L1282 444.5Z" fill="#c8c8c8"/><path d="M1282 448 L1290.5 452.5 L1299 448 L1299 450 L1290.5 455 L1282 450Z" fill="#c8c8c8"/><rect x="1281.5" y="467.5" width="11" height="11" fill="none" stroke="#c8c8c8" stroke-width="1.1"/><rect x="1285.5" y="473.5" width="12" height="10" fill="#535353" stroke="#c8c8c8" stroke-width="1.1"/><rect x="1284" y="510" width="13" height="13" fill="none" stroke="#c8c8c8" stroke-width="1" stroke-dasharray="2 1.5"/><g fill="#c8c8c8"><rect x="1282.5" y="508.5" width="3" height="3"/><rect x="1295.5" y="508.5" width="3" height="3"/><rect x="1282.5" y="521.5" width="3" height="3"/><rect x="1295.5" y="521.5" width="3" height="3"/><rect x="1289.5" y="515.5" width="2" height="2"/></g><path d="M1283 536 V553" stroke="#c8c8c8" stroke-width="1"/><rect x="1285" y="538" width="7" height="5" fill="#c8c8c8"/><rect x="1285" y="545" width="12" height="5" fill="#c8c8c8"/><rect x="1283" y="565" width="9" height="9" fill="#c8c8c8"/><rect x="1288" y="570" width="9" height="9" fill="#c8c8c8"/><rect x="1288" y="570" width="4" height="4" fill="#8a8a8a"/><g fill="#c8c8c8"><rect x="1282" y="607" width="17" height="2"/><rect x="1282" y="612" width="17" height="2"/><rect x="1282" y="617" width="17" height="3"/></g><circle cx="1290.5" cy="654.5" r="6" fill="none" stroke="#c8c8c8" stroke-width="2"/><circle cx="1290.5" cy="654.5" r="2" fill="#c8c8c8"/><path d="M1290.5 645 V664 M1281 654.5 H1300 M1284 648 L1297 661 M1297 648 L1284 661" stroke="#c8c8c8" stroke-width="1.2"/><circle cx="1290.5" cy="682.5" r="7.5" fill="#c8c8c8"/><rect x="1289.5" y="681" width="2.2" height="5" fill="#535353"/><circle cx="1290.5" cy="678.8" r="1.2" fill="#535353"/><rect x="1288.5" y="685.5" width="4" height="1" fill="#535353"/></svg>
<div class="t" style="left:1308px;top:96.46px;font-size:9.5px;line-height:9.5px;color:#f0f0f0;font-weight:bold;">Color</div>
<div class="t" style="left:1308px;top:123.96px;font-size:9.5px;line-height:9.5px;color:#f0f0f0;font-weight:bold;">Color G...</div>
<div class="t" style="left:1308px;top:151.46px;font-size:9.5px;line-height:9.5px;color:#f0f0f0;font-weight:bold;">Color T...</div>
<div class="t" style="left:1308px;top:192.96px;font-size:9.5px;line-height:9.5px;color:#f0f0f0;font-weight:bold;">Transp...</div>
<div class="t" style="left:1308px;top:220.96px;font-size:9.5px;line-height:9.5px;color:#f0f0f0;font-weight:bold;">Brushes</div>
<div class="t" style="left:1308px;top:248.46px;font-size:9.5px;line-height:9.5px;color:#f0f0f0;font-weight:bold;">Symbols</div>
<div class="t" style="left:1308px;top:276.46px;font-size:9.5px;line-height:9.5px;color:#f0f0f0;font-weight:bold;">Gradient</div>
<div class="t" style="left:1308px;top:317.96px;font-size:9.5px;line-height:9.5px;color:#f0f0f0;font-weight:bold;">Swatch...</div>
<div class="t" style="left:1308px;top:359.46px;font-size:9.5px;line-height:9.5px;color:#f0f0f0;font-weight:bold;">Appear...</div>
<div class="t" style="left:1308px;top:386.96px;font-size:9.5px;line-height:9.5px;color:#f0f0f0;font-weight:bold;">Graphi...</div>
<div class="t" style="left:1308px;top:414.96px;font-size:9.5px;line-height:9.5px;color:#f0f0f0;font-weight:bold;">Asset E...</div>
<div class="t" style="left:1308px;top:442.96px;font-size:9.5px;line-height:9.5px;color:#f0f0f0;font-weight:bold;">Layers</div>
<div class="t" style="left:1308px;top:470.96px;font-size:9.5px;line-height:9.5px;color:#f0f0f0;font-weight:bold;">Artboa...</div>
<div class="t" style="left:1308px;top:511.96px;font-size:9.5px;line-height:9.5px;color:#f0f0f0;font-weight:bold;">Transfo...</div>
<div class="t" style="left:1308px;top:539.96px;font-size:9.5px;line-height:9.5px;color:#f0f0f0;font-weight:bold;">Align</div>
<div class="t" style="left:1308px;top:567.96px;font-size:9.5px;line-height:9.5px;color:#f0f0f0;font-weight:bold;">Pathfin...</div>
<div class="t" style="left:1308px;top:608.96px;font-size:9.5px;line-height:9.5px;color:#f0f0f0;font-weight:bold;">Stroke</div>
<div class="t" style="left:1308px;top:649.96px;font-size:9.5px;line-height:9.5px;color:#f0f0f0;font-weight:bold;">Naviga...</div>
<div class="t" style="left:1308px;top:677.96px;font-size:9.5px;line-height:9.5px;color:#f0f0f0;font-weight:bold;">Info</div>
<div class="a" style="left:1028px;top:109px;width:241px;height:610px;background:#535353;box-shadow:-3px 0 5px rgba(0,0,0,0.12)"></div>
<div class="a" style="left:1028px;top:109px;width:241px;height:4px;background:#3b3b3b;"></div>
<div class="a" style="left:1028px;top:113px;width:1px;height:606px;background:#454545;"></div>
<div class="a" style="left:1029px;top:113px;width:240px;height:27px;background:#434343;"></div>
<div class="a" style="left:1126px;top:113px;width:45px;height:27px;background:#535353;"></div>
<div class="a" style="left:1061px;top:113px;width:1px;height:27px;background:#3a3a3a;"></div>
<div class="a" style="left:1093px;top:113px;width:1px;height:27px;background:#3a3a3a;"></div>
<div class="a" style="left:1125px;top:113px;width:1px;height:27px;background:#3a3a3a;"></div>
<div class="a" style="left:1171px;top:113px;width:1px;height:27px;background:#3a3a3a;"></div>
<div class="a" style="left:1204px;top:113px;width:1px;height:27px;background:#3a3a3a;"></div>
<div class="a" style="left:1038.2px;top:113px;width:22.799999999999955px;height:27px;overflow:hidden">
<div class="t" style="left:0px;top:9.02px;font-size:9.9px;line-height:9.9px;color:#c4c4c4;font-weight:normal;-webkit-text-stroke:0.4px #c4c4c4">Appearance</div>
</div>
<div class="a" style="left:1070.5px;top:113px;width:22.5px;height:27px;overflow:hidden">
<div class="t" style="left:0px;top:9.02px;font-size:9.9px;line-height:9.9px;color:#c4c4c4;font-weight:normal;-webkit-text-stroke:0.4px #c4c4c4">Graphic</div>
</div>
<div class="a" style="left:1101.9px;top:113px;width:23.09999999999991px;height:27px;overflow:hidden">
<div class="t" style="left:0px;top:9.02px;font-size:9.9px;line-height:9.9px;color:#c4c4c4;font-weight:normal;-webkit-text-stroke:0.4px #c4c4c4">Assets</div>
</div>
<div class="a" style="left:1134.3px;top:113px;width:36.700000000000045px;height:27px;overflow:hidden">
<div class="t" style="left:0px;top:9.02px;font-size:9.9px;line-height:9.9px;color:#f4f4f4;font-weight:normal;-webkit-text-stroke:0.4px #f4f4f4">Layers</div>
</div>
<div class="a" style="left:1180.2px;top:113px;width:23.799999999999955px;height:27px;overflow:hidden">
<div class="t" style="left:0px;top:9.02px;font-size:9.9px;line-height:9.9px;color:#c4c4c4;font-weight:normal;-webkit-text-stroke:0.4px #c4c4c4">Artboards</div>
</div>
<svg class="a" style="left:1226px;top:121px;" width="40" height="13" viewBox="0 0 40 13"><path d="M3.5 4 L6.5 6.5 L3.5 9 L4.2 6.5Z M8 4 L11 6.5 L8 9 L8.7 6.5Z" fill="#e8e8e8" stroke="#e8e8e8" stroke-width="0.5" stroke-linejoin="round"/><rect x="19" y="0" width="1.3" height="11" fill="#bdbdbd"/><g fill="#d4d4d4"><rect x="27" y="2" width="10.5" height="1"/><rect x="27" y="4" width="10.5" height="1"/><rect x="27" y="6" width="10.5" height="1"/><rect x="27" y="8" width="10.5" height="1"/></g></svg>
<div class="a" style="left:1035px;top:147px;width:229px;height:545px;background:#535353;border:1px solid #5c5c5c;border-radius:2px"></div>
<svg class="a" style="left:0px;top:0px;" width="1366" height="768" viewBox="0 0 1366 768"><rect x="1035" y="147" width="216" height="20" fill="#4e6179"/><rect x="1035" y="167" width="216" height="1" fill="#5e5e5e"/><path d="M1037.8 156.5 C1040 151.0 1048.6 151.0 1050.8 156.5 C1048.6 162.0 1040 162.0 1037.8 156.5Z" fill="#cfcfcf"/><circle cx="1044.3" cy="156.5" r="2.3" fill="none" stroke="#3e4e62" stroke-width="1.3"/><rect x="1077.7" y="148" width="3.4" height="18" fill="#4a7cff"/><circle cx="1226" cy="157" r="3.9" fill="none" stroke="#d8d8d8" stroke-width="1.2"/><path d="M1089.5 154.5 L1093.4 158.5 L1097.3 154.5" fill="none" stroke="#f0f0f0" stroke-width="1.5"/><rect x="1107.75" y="148.75" width="16.5" height="16.5" fill="#fff" stroke="#000" stroke-width="1.5"/><path d="M1109 156 H1111" stroke="#000" stroke-width="1"/><rect x="1112" y="154" width="1.6" height="4" fill="#000"/><rect x="1116" y="156" width="2" height="3" fill="#3a4a8a"/><rect x="1116.5" y="158" width="1" height="4" fill="#444"/><rect x="1116.5" y="161" width="1" height="1.5" fill="#e06030"/><rect x="1120.5" y="151" width="1.5" height="2.5" fill="#000"/><path d="M1119 158 H1122 V160 H1123" fill="none" stroke="#000" stroke-width="1.2"/><rect x="1035" y="188" width="216" height="1" fill="#5e5e5e"/><path d="M1037.8 177.5 C1040 172.0 1048.6 172.0 1050.8 177.5 C1048.6 183.0 1040 183.0 1037.8 177.5Z" fill="#cfcfcf"/><circle cx="1044.3" cy="177.5" r="2.3" fill="none" stroke="#484848" stroke-width="1.3"/><rect x="1077.7" y="169" width="3.4" height="18" fill="#4a7cff"/><circle cx="1226" cy="178" r="3.9" fill="none" stroke="#d8d8d8" stroke-width="1.2"/><rect x="1130.75" y="169.75" width="16.5" height="16.5" fill="#fff" stroke="#000" stroke-width="1.5"/><path d="M1132 176.5 L1139 172.5 L1145 176 V185" fill="none" stroke="#2e3192" stroke-width="2.6"/><rect x="1035" y="209" width="216" height="1" fill="#5e5e5e"/><path d="M1037.8 198.5 C1040 193.0 1048.6 193.0 1050.8 198.5 C1048.6 204.0 1040 204.0 1037.8 198.5Z" fill="#cfcfcf"/><circle cx="1044.3" cy="198.5" r="2.3" fill="none" stroke="#484848" stroke-width="1.3"/><rect x="1077.7" y="190" width="3.4" height="18" fill="#4a7cff"/><circle cx="1226" cy="199" r="3.9" fill="none" stroke="#d8d8d8" stroke-width="1.2"/><rect x="1130.75" y="190.75" width="16.5" height="16.5" fill="#fff" stroke="#000" stroke-width="1.5"/><path d="M1139 192 V206" stroke="#b4b4b4" stroke-width="1.5"/><rect x="1035" y="230" width="216" height="1" fill="#5e5e5e"/><path d="M1037.8 219.5 C1040 214.0 1048.6 214.0 1050.8 219.5 C1048.6 225.0 1040 225.0 1037.8 219.5Z" fill="#cfcfcf"/><circle cx="1044.3" cy="219.5" r="2.3" fill="none" stroke="#484848" stroke-width="1.3"/><rect x="1077.7" y="211" width="3.4" height="18" fill="#4a7cff"/><circle cx="1226" cy="220" r="3.9" fill="none" stroke="#d8d8d8" stroke-width="1.2"/><rect x="1130.75" y="211.75" width="16.5" height="16.5" fill="#fff" stroke="#000" stroke-width="1.5"/><path d="M1139 213 V227" stroke="#999" stroke-width="1"/><rect x="1035" y="251" width="216" height="1" fill="#5e5e5e"/><path d="M1037.8 240.5 C1040 235.0 1048.6 235.0 1050.8 240.5 C1048.6 246.0 1040 246.0 1037.8 240.5Z" fill="#cfcfcf"/><circle cx="1044.3" cy="240.5" r="2.3" fill="none" stroke="#484848" stroke-width="1.3"/><rect x="1077.7" y="232" width="3.4" height="18" fill="#4a7cff"/><circle cx="1226" cy="241" r="3.9" fill="none" stroke="#d8d8d8" stroke-width="1.2"/><rect x="1130.75" y="232.75" width="16.5" height="16.5" fill="#fff" stroke="#000" stroke-width="1.5"/><polygon points="1139.00,235.00 1144.20,238.00 1144.20,244.00 1139.00,247.00 1133.80,244.00 1133.80,238.00" fill="none" stroke="#000" stroke-width="2.4"/><rect x="1035" y="272" width="216" height="1" fill="#5e5e5e"/><path d="M1037.8 261.5 C1040 256.0 1048.6 256.0 1050.8 261.5 C1048.6 267.0 1040 267.0 1037.8 261.5Z" fill="#cfcfcf"/><circle cx="1044.3" cy="261.5" r="2.3" fill="none" stroke="#484848" stroke-width="1.3"/><rect x="1077.7" y="253" width="3.4" height="18" fill="#4a7cff"/><circle cx="1226" cy="262" r="3.9" fill="none" stroke="#d8d8d8" stroke-width="1.2"/><rect x="1130.75" y="253.75" width="16.5" height="16.5" fill="#fff" stroke="#000" stroke-width="1.5"/><path d="M1132 258 L1146 266" stroke="#333" stroke-width="1.2"/><rect x="1035" y="293" width="216" height="1" fill="#5e5e5e"/><path d="M1037.8 282.5 C1040 277.0 1048.6 277.0 1050.8 282.5 C1048.6 288.0 1040 288.0 1037.8 282.5Z" fill="#cfcfcf"/><circle cx="1044.3" cy="282.5" r="2.3" fill="none" stroke="#484848" stroke-width="1.3"/><rect x="1077.7" y="274" width="3.4" height="18" fill="#4a7cff"/><circle cx="1226" cy="283" r="3.9" fill="none" stroke="#d8d8d8" stroke-width="1.2"/><rect x="1130.75" y="274.75" width="16.5" height="16.5" fill="#fff" stroke="#000" stroke-width="1.5"/><path d="M1132 279 L1146 287" stroke="#333" stroke-width="1.2"/><rect x="1035" y="314" width="216" height="1" fill="#5e5e5e"/><path d="M1037.8 303.5 C1040 298.0 1048.6 298.0 1050.8 303.5 C1048.6 309.0 1040 309.0 1037.8 303.5Z" fill="#cfcfcf"/><circle cx="1044.3" cy="303.5" r="2.3" fill="none" stroke="#484848" stroke-width="1.3"/><rect x="1077.7" y="295" width="3.4" height="18" fill="#4a7cff"/><circle cx="1226" cy="304" r="3.9" fill="none" stroke="#d8d8d8" stroke-width="1.2"/><rect x="1130.75" y="295.75" width="16.5" height="16.5" fill="#fff" stroke="#000" stroke-width="1.5"/><path d="M1132 300 L1146 308" stroke="#999" stroke-width="1"/><rect x="1035" y="335" width="216" height="1" fill="#5e5e5e"/><path d="M1037.8 324.5 C1040 319.0 1048.6 319.0 1050.8 324.5 C1048.6 330.0 1040 330.0 1037.8 324.5Z" fill="#cfcfcf"/><circle cx="1044.3" cy="324.5" r="2.3" fill="none" stroke="#484848" stroke-width="1.3"/><rect x="1077.7" y="316" width="3.4" height="18" fill="#4a7cff"/><circle cx="1226" cy="325" r="3.9" fill="none" stroke="#d8d8d8" stroke-width="1.2"/><rect x="1130.75" y="316.75" width="16.5" height="16.5" fill="#fff" stroke="#000" stroke-width="1.5"/><path d="M1132 321 L1146 329" stroke="#999" stroke-width="1"/><rect x="1035" y="356" width="216" height="1" fill="#5e5e5e"/><path d="M1037.8 345.5 C1040 340.0 1048.6 340.0 1050.8 345.5 C1048.6 351.0 1040 351.0 1037.8 345.5Z" fill="#cfcfcf"/><circle cx="1044.3" cy="345.5" r="2.3" fill="none" stroke="#484848" stroke-width="1.3"/><rect x="1077.7" y="337" width="3.4" height="18" fill="#4a7cff"/><circle cx="1226" cy="346" r="3.9" fill="none" stroke="#d8d8d8" stroke-width="1.2"/><rect x="1130.75" y="337.75" width="16.5" height="16.5" fill="#fff" stroke="#000" stroke-width="1.5"/><path d="M1132 350 L1146 342" stroke="#333" stroke-width="1.2"/><rect x="1035" y="377" width="216" height="1" fill="#5e5e5e"/><path d="M1037.8 366.5 C1040 361.0 1048.6 361.0 1050.8 366.5 C1048.6 372.0 1040 372.0 1037.8 366.5Z" fill="#cfcfcf"/><circle cx="1044.3" cy="366.5" r="2.3" fill="none" stroke="#484848" stroke-width="1.3"/><rect x="1077.7" y="358" width="3.4" height="18" fill="#4a7cff"/><circle cx="1226" cy="367" r="3.9" fill="none" stroke="#d8d8d8" stroke-width="1.2"/><rect x="1130.75" y="358.75" width="16.5" height="16.5" fill="#fff" stroke="#000" stroke-width="1.5"/><path d="M1132 371 L1146 363" stroke="#999" stroke-width="1"/><rect x="1035" y="398" width="216" height="1" fill="#5e5e5e"/><path d="M1037.8 387.5 C1040 382.0 1048.6 382.0 1050.8 387.5 C1048.6 393.0 1040 393.0 1037.8 387.5Z" fill="#cfcfcf"/><circle cx="1044.3" cy="387.5" r="2.3" fill="none" stroke="#484848" stroke-width="1.3"/><rect x="1077.7" y="379" width="3.4" height="18" fill="#4a7cff"/><circle cx="1226" cy="388" r="3.9" fill="none" stroke="#d8d8d8" stroke-width="1.2"/><rect x="1130.75" y="379.75" width="16.5" height="16.5" fill="#fff" stroke="#000" stroke-width="1.5"/><path d="M1132 392 L1146 384" stroke="#999" stroke-width="1"/><rect x="1035" y="419" width="216" height="1" fill="#5e5e5e"/><path d="M1037.8 408.5 C1040 403.0 1048.6 403.0 1050.8 408.5 C1048.6 414.0 1040 414.0 1037.8 408.5Z" fill="#cfcfcf"/><circle cx="1044.3" cy="408.5" r="2.3" fill="none" stroke="#484848" stroke-width="1.3"/><rect x="1077.7" y="400" width="3.4" height="18" fill="#4a7cff"/><circle cx="1226" cy="409" r="3.9" fill="none" stroke="#d8d8d8" stroke-width="1.2"/><rect x="1130.75" y="400.75" width="16.5" height="16.5" fill="#fff" stroke="#000" stroke-width="1.5"/><path d="M1132 413 L1146 405" stroke="#999" stroke-width="1"/><rect x="1035" y="440" width="216" height="1" fill="#5e5e5e"/><path d="M1037.8 429.5 C1040 424.0 1048.6 424.0 1050.8 429.5 C1048.6 435.0 1040 435.0 1037.8 429.5Z" fill="#cfcfcf"/><circle cx="1044.3" cy="429.5" r="2.3" fill="none" stroke="#484848" stroke-width="1.3"/><rect x="1077.7" y="421" width="3.4" height="18" fill="#4a7cff"/><circle cx="1226" cy="430" r="3.9" fill="none" stroke="#d8d8d8" stroke-width="1.2"/><rect x="1130.75" y="421.75" width="16.5" height="16.5" fill="#fff" stroke="#000" stroke-width="1.5"/><path d="M1132 426 L1146 434" stroke="#333" stroke-width="1.2"/><rect x="1035" y="461" width="216" height="1" fill="#5e5e5e"/><path d="M1037.8 450.5 C1040 445.0 1048.6 445.0 1050.8 450.5 C1048.6 456.0 1040 456.0 1037.8 450.5Z" fill="#cfcfcf"/><circle cx="1044.3" cy="450.5" r="2.3" fill="none" stroke="#484848" stroke-width="1.3"/><rect x="1077.7" y="442" width="3.4" height="18" fill="#4a7cff"/><circle cx="1226" cy="451" r="3.9" fill="none" stroke="#d8d8d8" stroke-width="1.2"/><rect x="1130.75" y="442.75" width="16.5" height="16.5" fill="#fff" stroke="#000" stroke-width="1.5"/><path d="M1132 447 L1146 455" stroke="#333" stroke-width="1.2"/><rect x="1035" y="482" width="216" height="1" fill="#5e5e5e"/><path d="M1037.8 471.5 C1040 466.0 1048.6 466.0 1050.8 471.5 C1048.6 477.0 1040 477.0 1037.8 471.5Z" fill="#cfcfcf"/><circle cx="1044.3" cy="471.5" r="2.3" fill="none" stroke="#484848" stroke-width="1.3"/><rect x="1077.7" y="463" width="3.4" height="18" fill="#4a7cff"/><circle cx="1226" cy="472" r="3.9" fill="none" stroke="#d8d8d8" stroke-width="1.2"/><rect x="1130.75" y="463.75" width="16.5" height="16.5" fill="#fff" stroke="#000" stroke-width="1.5"/><path d="M1139 465 V479" stroke="#b4b4b4" stroke-width="1.5"/><rect x="1035" y="503" width="216" height="1" fill="#5e5e5e"/><path d="M1037.8 492.5 C1040 487.0 1048.6 487.0 1050.8 492.5 C1048.6 498.0 1040 498.0 1037.8 492.5Z" fill="#cfcfcf"/><circle cx="1044.3" cy="492.5" r="2.3" fill="none" stroke="#484848" stroke-width="1.3"/><rect x="1077.7" y="484" width="3.4" height="18" fill="#4a7cff"/><circle cx="1226" cy="493" r="3.9" fill="none" stroke="#d8d8d8" stroke-width="1.2"/><rect x="1130.75" y="484.75" width="16.5" height="16.5" fill="#fff" stroke="#000" stroke-width="1.5"/><path d="M1139 486 V500" stroke="#6a6a6a" stroke-width="2"/><rect x="1035" y="524" width="216" height="1" fill="#5e5e5e"/><path d="M1037.8 513.5 C1040 508.0 1048.6 508.0 1050.8 513.5 C1048.6 519.0 1040 519.0 1037.8 513.5Z" fill="#cfcfcf"/><circle cx="1044.3" cy="513.5" r="2.3" fill="none" stroke="#484848" stroke-width="1.3"/><rect x="1077.7" y="505" width="3.4" height="18" fill="#4a7cff"/><circle cx="1226" cy="514" r="3.9" fill="none" stroke="#d8d8d8" stroke-width="1.2"/><rect x="1130.75" y="505.75" width="16.5" height="16.5" fill="#fff" stroke="#000" stroke-width="1.5"/><path d="M1139 507 V521" stroke="#6a6a6a" stroke-width="2"/><rect x="1035" y="545" width="216" height="1" fill="#5e5e5e"/><path d="M1037.8 534.5 C1040 529.0 1048.6 529.0 1050.8 534.5 C1048.6 540.0 1040 540.0 1037.8 534.5Z" fill="#cfcfcf"/><circle cx="1044.3" cy="534.5" r="2.3" fill="none" stroke="#484848" stroke-width="1.3"/><rect x="1077.7" y="526" width="3.4" height="18" fill="#4a7cff"/><circle cx="1226" cy="535" r="3.9" fill="none" stroke="#d8d8d8" stroke-width="1.2"/><rect x="1130.75" y="526.75" width="16.5" height="16.5" fill="#fff" stroke="#000" stroke-width="1.5"/><path d="M1132 539 L1146 531" stroke="#333" stroke-width="1.2"/><rect x="1035" y="566" width="216" height="1" fill="#5e5e5e"/><path d="M1037.8 555.5 C1040 550.0 1048.6 550.0 1050.8 555.5 C1048.6 561.0 1040 561.0 1037.8 555.5Z" fill="#cfcfcf"/><circle cx="1044.3" cy="555.5" r="2.3" fill="none" stroke="#484848" stroke-width="1.3"/><rect x="1077.7" y="547" width="3.4" height="18" fill="#4a7cff"/><circle cx="1226" cy="556" r="3.9" fill="none" stroke="#d8d8d8" stroke-width="1.2"/><rect x="1130.75" y="547.75" width="16.5" height="16.5" fill="#fff" stroke="#000" stroke-width="1.5"/><path d="M1132 560 L1146 552" stroke="#333" stroke-width="1.2"/><rect x="1035" y="587" width="216" height="1" fill="#5e5e5e"/><path d="M1037.8 576.5 C1040 571.0 1048.6 571.0 1050.8 576.5 C1048.6 582.0 1040 582.0 1037.8 576.5Z" fill="#cfcfcf"/><circle cx="1044.3" cy="576.5" r="2.3" fill="none" stroke="#484848" stroke-width="1.3"/><rect x="1077.7" y="568" width="3.4" height="18" fill="#4a7cff"/><circle cx="1226" cy="577" r="3.9" fill="none" stroke="#d8d8d8" stroke-width="1.2"/><rect x="1130.75" y="568.75" width="16.5" height="16.5" fill="#fff" stroke="#000" stroke-width="1.5"/><path d="M1132 573 L1146 581" stroke="#333" stroke-width="1.2"/><rect x="1035" y="608" width="216" height="1" fill="#5e5e5e"/><path d="M1037.8 597.5 C1040 592.0 1048.6 592.0 1050.8 597.5 C1048.6 603.0 1040 603.0 1037.8 597.5Z" fill="#cfcfcf"/><circle cx="1044.3" cy="597.5" r="2.3" fill="none" stroke="#484848" stroke-width="1.3"/><rect x="1077.7" y="589" width="3.4" height="18" fill="#4a7cff"/><circle cx="1226" cy="598" r="3.9" fill="none" stroke="#d8d8d8" stroke-width="1.2"/><rect x="1130.75" y="589.75" width="16.5" height="16.5" fill="#fff" stroke="#000" stroke-width="1.5"/><path d="M1132 594 L1146 602" stroke="#333" stroke-width="1.2"/><rect x="1035" y="629" width="216" height="1" fill="#5e5e5e"/><path d="M1037.8 618.5 C1040 613.0 1048.6 613.0 1050.8 618.5 C1048.6 624.0 1040 624.0 1037.8 618.5Z" fill="#cfcfcf"/><circle cx="1044.3" cy="618.5" r="2.3" fill="none" stroke="#484848" stroke-width="1.3"/><rect x="1077.7" y="610" width="3.4" height="18" fill="#4a7cff"/><circle cx="1226" cy="619" r="3.9" fill="none" stroke="#d8d8d8" stroke-width="1.2"/><rect x="1130.75" y="610.75" width="16.5" height="16.5" fill="#fff" stroke="#000" stroke-width="1.5"/><path d="M1139 612 V626" stroke="#b4b4b4" stroke-width="1.5"/><rect x="1035" y="650" width="216" height="1" fill="#5e5e5e"/><path d="M1037.8 639.5 C1040 634.0 1048.6 634.0 1050.8 639.5 C1048.6 645.0 1040 645.0 1037.8 639.5Z" fill="#cfcfcf"/><circle cx="1044.3" cy="639.5" r="2.3" fill="none" stroke="#484848" stroke-width="1.3"/><rect x="1077.7" y="631" width="3.4" height="18" fill="#4a7cff"/><circle cx="1226" cy="640" r="3.9" fill="none" stroke="#d8d8d8" stroke-width="1.2"/><rect x="1130.75" y="631.75" width="16.5" height="16.5" fill="#fff" stroke="#000" stroke-width="1.5"/><path d="M1139 633 V647" stroke="#b4b4b4" stroke-width="1.5"/><rect x="1035" y="671" width="216" height="1" fill="#5e5e5e"/><path d="M1037.8 660.5 C1040 655.0 1048.6 655.0 1050.8 660.5 C1048.6 666.0 1040 666.0 1037.8 660.5Z" fill="#cfcfcf"/><circle cx="1044.3" cy="660.5" r="2.3" fill="none" stroke="#484848" stroke-width="1.3"/><rect x="1077.7" y="652" width="3.4" height="18" fill="#4a7cff"/><circle cx="1226" cy="661" r="3.9" fill="none" stroke="#d8d8d8" stroke-width="1.2"/><rect x="1130.75" y="652.75" width="16.5" height="16.5" fill="#fff" stroke="#000" stroke-width="1.5"/><path d="M1132 665 L1146 657" stroke="#333" stroke-width="1.2"/><rect x="1035" y="692" width="216" height="1" fill="#5e5e5e"/><path d="M1037.8 681.5 C1040 676.0 1048.6 676.0 1050.8 681.5 C1048.6 687.0 1040 687.0 1037.8 681.5Z" fill="#cfcfcf"/><circle cx="1044.3" cy="681.5" r="2.3" fill="none" stroke="#484848" stroke-width="1.3"/><rect x="1077.7" y="673" width="3.4" height="18" fill="#4a7cff"/><circle cx="1226" cy="682" r="3.9" fill="none" stroke="#d8d8d8" stroke-width="1.2"/><rect x="1130.75" y="673.75" width="16.5" height="16.5" fill="#fff" stroke="#000" stroke-width="1.5"/><path d="M1132 686 L1146 678" stroke="#333" stroke-width="1.2"/><rect x="1055" y="147" width="1" height="545" fill="#5e5e5e"/><rect x="1076" y="147" width="1" height="545" fill="#5e5e5e"/><rect x="1082" y="147" width="1" height="545" fill="#5e5e5e"/><rect x="1215" y="147" width="1" height="545" fill="#5e5e5e"/><path d="M1245 147 L1251 147 L1251 153Z" fill="#e8e8e8"/><rect x="1251" y="147" width="12" height="545" fill="#4a4a4a"/><path d="M1253.5 157 L1257 153.5 L1260.5 157" fill="none" stroke="#9a9a9a" stroke-width="1.2"/><rect x="1252.5" y="159" width="9" height="64" rx="4.5" fill="#5c5c5c"/><path d="M1253.5 683 L1257 686.5 L1260.5 683" fill="none" stroke="#9a9a9a" stroke-width="1.2"/><circle cx="1134" cy="699.5" r="3.8" fill="none" stroke="#6e6e6e" stroke-width="1.3"/><path d="M1131.5 702 L1127 706.5" stroke="#6e6e6e" stroke-width="1.6"/><rect x="1152.5" y="696.5" width="7" height="7" fill="none" stroke="#c8c8c8" stroke-width="1.2"/><rect x="1155.5" y="699.5" width="7" height="7" fill="none" stroke="#9a9a9a" stroke-width="1.2"/><rect x="1155.5" y="699.5" width="4.5" height="4.5" fill="#c0c0c0"/><path d="M1176.5 696 V700.5 H1180.5 M1178.5 698.5 L1180.5 700.5 L1178.5 702.5" fill="none" stroke="#d0d0d0" stroke-width="1.1"/><path d="M1182 697 H1190 V706 H1185.5 L1182 702.5Z" fill="#c8c8c8"/><path d="M1182.6 703.4 L1185.3 703.4 L1185.3 706.1Z" fill="#c8c8c8" stroke="#535353" stroke-width="0.8"/><path d="M1205 696 H1215 V706 H1209.5 L1205 701.5Z" fill="#c8c8c8"/><path d="M1205.6 702.6 L1208.9 702.6 L1208.9 705.9Z" fill="#c8c8c8" stroke="#535353" stroke-width="0.8"/><rect x="1231.5" y="698.5" width="8" height="8.5" fill="none" stroke="#6e6e6e" stroke-width="1"/><path d="M1230 698 H1241 M1234 696 H1237 M1234 700 V705.5 M1237 700 V705.5" stroke="#6e6e6e" stroke-width="1"/></svg>
<div class="t" style="left:1129.7px;top:152.56px;font-size:9.74px;line-height:9.74px;color:#f0f0f0;font-weight:normal;-webkit-text-stroke:0.2px #f0f0f0">Layer 1</div>
<div class="t" style="left:1153.6px;top:174.46px;font-size:9.74px;line-height:9.74px;color:#e6e6e6;font-weight:normal;-webkit-text-stroke:0.2px #e6e6e6">&lt;C...</div>
<div class="t" style="left:1153.6px;top:195.46px;font-size:9.74px;line-height:9.74px;color:#e6e6e6;font-weight:normal;-webkit-text-stroke:0.2px #e6e6e6">&lt;Pa...</div>
<div class="t" style="left:1153.6px;top:216.46px;font-size:9.74px;line-height:9.74px;color:#e6e6e6;font-weight:normal;-webkit-text-stroke:0.2px #e6e6e6">&lt;Pa...</div>
<div class="t" style="left:1153.6px;top:237.46px;font-size:9.74px;line-height:9.74px;color:#e6e6e6;font-weight:normal;-webkit-text-stroke:0.2px #e6e6e6">&lt;C...</div>
<div class="t" style="left:1153.6px;top:258.46px;font-size:9.74px;line-height:9.74px;color:#e6e6e6;font-weight:normal;-webkit-text-stroke:0.2px #e6e6e6">&lt;Pa...</div>
<div class="t" style="left:1153.6px;top:279.46px;font-size:9.74px;line-height:9.74px;color:#e6e6e6;font-weight:normal;-webkit-text-stroke:0.2px #e6e6e6">&lt;Pa...</div>
<div class="t" style="left:1153.6px;top:300.46px;font-size:9.74px;line-height:9.74px;color:#e6e6e6;font-weight:normal;-webkit-text-stroke:0.2px #e6e6e6">&lt;Pa...</div>
<div class="t" style="left:1153.6px;top:321.46px;font-size:9.74px;line-height:9.74px;color:#e6e6e6;font-weight:normal;-webkit-text-stroke:0.2px #e6e6e6">&lt;Pa...</div>
<div class="t" style="left:1153.6px;top:342.46px;font-size:9.74px;line-height:9.74px;color:#e6e6e6;font-weight:normal;-webkit-text-stroke:0.2px #e6e6e6">&lt;Pa...</div>
<div class="t" style="left:1153.6px;top:363.46px;font-size:9.74px;line-height:9.74px;color:#e6e6e6;font-weight:normal;-webkit-text-stroke:0.2px #e6e6e6">&lt;Pa...</div>
<div class="t" style="left:1153.6px;top:384.46px;font-size:9.74px;line-height:9.74px;color:#e6e6e6;font-weight:normal;-webkit-text-stroke:0.2px #e6e6e6">&lt;Pa...</div>
<div class="t" style="left:1153.6px;top:405.46px;font-size:9.74px;line-height:9.74px;color:#e6e6e6;font-weight:normal;-webkit-text-stroke:0.2px #e6e6e6">&lt;Pa...</div>
<div class="t" style="left:1153.6px;top:426.46px;font-size:9.74px;line-height:9.74px;color:#e6e6e6;font-weight:normal;-webkit-text-stroke:0.2px #e6e6e6">&lt;Pa...</div>
<div class="t" style="left:1153.6px;top:447.46px;font-size:9.74px;line-height:9.74px;color:#e6e6e6;font-weight:normal;-webkit-text-stroke:0.2px #e6e6e6">&lt;Pa...</div>
<div class="t" style="left:1153.6px;top:468.46px;font-size:9.74px;line-height:9.74px;color:#e6e6e6;font-weight:normal;-webkit-text-stroke:0.2px #e6e6e6">&lt;Pa...</div>
<div class="t" style="left:1153.6px;top:489.46px;font-size:9.74px;line-height:9.74px;color:#e6e6e6;font-weight:normal;-webkit-text-stroke:0.2px #e6e6e6">&lt;Pa...</div>
<div class="t" style="left:1153.6px;top:510.46px;font-size:9.74px;line-height:9.74px;color:#e6e6e6;font-weight:normal;-webkit-text-stroke:0.2px #e6e6e6">&lt;Pa...</div>
<div class="t" style="left:1153.6px;top:531.46px;font-size:9.74px;line-height:9.74px;color:#e6e6e6;font-weight:normal;-webkit-text-stroke:0.2px #e6e6e6">&lt;Pa...</div>
<div class="t" style="left:1153.6px;top:552.46px;font-size:9.74px;line-height:9.74px;color:#e6e6e6;font-weight:normal;-webkit-text-stroke:0.2px #e6e6e6">&lt;Pa...</div>
<div class="t" style="left:1153.6px;top:573.46px;font-size:9.74px;line-height:9.74px;color:#e6e6e6;font-weight:normal;-webkit-text-stroke:0.2px #e6e6e6">&lt;Pa...</div>
<div class="t" style="left:1153.6px;top:594.46px;font-size:9.74px;line-height:9.74px;color:#e6e6e6;font-weight:normal;-webkit-text-stroke:0.2px #e6e6e6">&lt;Pa...</div>
<div class="t" style="left:1153.6px;top:615.46px;font-size:9.74px;line-height:9.74px;color:#e6e6e6;font-weight:normal;-webkit-text-stroke:0.2px #e6e6e6">&lt;Pa...</div>
<div class="t" style="left:1153.6px;top:636.46px;font-size:9.74px;line-height:9.74px;color:#e6e6e6;font-weight:normal;-webkit-text-stroke:0.2px #e6e6e6">&lt;Pa...</div>
<div class="t" style="left:1153.6px;top:657.46px;font-size:9.74px;line-height:9.74px;color:#e6e6e6;font-weight:normal;-webkit-text-stroke:0.2px #e6e6e6">&lt;Pa...</div>
<div class="t" style="left:1153.6px;top:678.46px;font-size:9.74px;line-height:9.74px;color:#e6e6e6;font-weight:normal;-webkit-text-stroke:0.2px #e6e6e6">&lt;Pa...</div>
<div class="t" style="left:1035px;top:698.06px;font-size:9.74px;line-height:9.74px;color:#d8d8d8;font-weight:normal;-webkit-text-stroke:0.2px #d8d8d8">1 Layer</div>
<div class="a" style="left:1028px;top:711px;width:241px;height:2px;background:#3b3b3b;"></div>
<div class="a" style="left:1028px;top:713px;width:241px;height:5px;background:#535353;"></div>
<div class="a" style="left:1028px;top:718px;width:241px;height:1px;background:#3b3b3b;"></div>
<div class="a" style="left:1028px;top:719px;width:241px;height:8px;background:#4b4b4b;"></div>
<div class="a" style="left:1252px;top:720px;width:16px;height:7px;background:#585858;"></div>
<svg class="a" style="left:1240px;top:719px;" width="8" height="7" viewBox="0 0 8 7"><path d="M2 6 L6 2" stroke="#bdbdbd" stroke-width="1.3"/></svg>
<svg class="a" style="left:1139px;top:713px;" width="20" height="5" viewBox="0 0 20 5"><rect x="0" y="0.5" width="1" height="3.5" fill="#393939"/><rect x="2" y="0.5" width="1" height="3.5" fill="#393939"/><rect x="4" y="0.5" width="1" height="3.5" fill="#393939"/><rect x="6" y="0.5" width="1" height="3.5" fill="#393939"/><rect x="8" y="0.5" width="1" height="3.5" fill="#393939"/><rect x="10" y="0.5" width="1" height="3.5" fill="#393939"/><rect x="12" y="0.5" width="1" height="3.5" fill="#393939"/><rect x="14" y="0.5" width="1" height="3.5" fill="#393939"/><rect x="16" y="0.5" width="1" height="3.5" fill="#393939"/><rect x="18" y="0.5" width="1" height="3.5" fill="#393939"/></svg>
<div class="a" style="left:0px;top:728px;width:1366px;height:40px;background:linear-gradient(75deg,#0e0e0e 0px,#141414 200px,#101010 440px,#1f1f1f 500px,#232323 540px,#121212 600px,#101010 660px,#1f1f1f 715px,#121212 760px,#111 840px,#202020 890px,#1e1e1e 930px,#101010 980px,#0f0f0f 1366px);"></div>
<div class="a" style="left:0px;top:728px;width:1366px;height:1px;background:#6e6e6e;"></div>
<div class="a" style="left:0px;top:729px;width:1366px;height:1px;background:#2a2a2a;"></div>
<svg class="a" style="left:7px;top:728px;" width="42" height="40" viewBox="0 0 42 40"><defs><radialGradient id="orb" cx="0.5" cy="0.35" r="0.65"><stop offset="0" stop-color="#7ec3e8"/><stop offset="0.5" stop-color="#1f6fa8"/><stop offset="0.85" stop-color="#0d3f6e"/><stop offset="1" stop-color="#29a6e0"/></radialGradient></defs>
<circle cx="20" cy="20" r="18" fill="url(#orb)" stroke="#3b4a55" stroke-width="1"/>
<ellipse cx="20" cy="12" rx="13" ry="8" fill="#ffffff" opacity="0.25"/>
<path d="M11 11 C13 10 16 10 19 11.5 L18 19 C15 18 12 18 10 19Z" fill="#f0581e"/>
<path d="M20.5 12 C23 13 26 12.5 29 11 L28 18.5 C25 20 22 20 19.5 19.5Z" fill="#8cc43c"/>
<path d="M10 20.5 C12 19.5 15 19.5 18 21 L17 28.5 C14 27.5 11 27.5 9 28.5Z" fill="#29a1e6"/>
<path d="M19.5 21 C22 22 25 22 28 20 L27 27.5 C24 29 21 29 18.5 28.5Z" fill="#fcc214"/></svg>
<div class="a" style="left:61px;top:729px;width:58px;height:38px;background:linear-gradient(160deg,#5a5a5a 0%,#2e2e2e 40%,#1e1e1e 41%,#262626 100%);border:1px solid #5e5e5e;border-radius:3px"></div>
<div class="a" style="left:122px;top:729px;width:58px;height:38px;background:linear-gradient(160deg,#b8b8b8 0%,#8a8a8a 40%,#6e6e6e 41%,#7a7a7a 100%);border:1px solid #d0d0d0;border-radius:3px"></div>
<div class="a" style="left:184px;top:729px;width:58px;height:38px;background:linear-gradient(160deg,#5a5a5a 0%,#2e2e2e 40%,#1e1e1e 41%,#262626 100%);border:1px solid #5e5e5e;border-radius:3px"></div>
<div class="a" style="left:246px;top:729px;width:58px;height:38px;background:linear-gradient(160deg,#5a5a5a 0%,#2e2e2e 40%,#1e1e1e 41%,#262626 100%);border:1px solid #5e5e5e;border-radius:3px"></div>
<svg class="a" style="left:74px;top:733px;" width="30" height="30" viewBox="0 0 30 30"><circle cx="15" cy="15" r="14.5" fill="#db4437"/>
<path d="M15 15 L2.4 7.7 A14.5 14.5 0 0 0 9.2 28.3Z" fill="#0f9d58"/>
<path d="M15 15 L9.2 28.3 A14.5 14.5 0 0 0 29.5 15 L15 15Z" fill="#fcc934"/>
<path d="M15 15 L29.5 15 A14.5 14.5 0 0 0 27.5 7.7 L15 7.7Z" fill="#fcc934"/>
<path d="M15 7.7 L27.5 7.7 A14.5 14.5 0 0 0 2.4 7.7Z" fill="#db4437"/>
<circle cx="15" cy="15" r="6.5" fill="#fff"/><circle cx="15" cy="15" r="5.2" fill="#4285f4"/></svg>
<div class="a" style="left:137px;top:733px;width:28px;height:27px;background:#261300;border:2px solid #ff7f18"></div>
<div class="t" style="left:142.5px;top:737.49px;font-size:17.5px;line-height:17.5px;color:#ff8a1e;font-weight:normal;-webkit-text-stroke:0.3px #ff8a1e;letter-spacing:-0.5px">Ai</div>
<svg class="a" style="left:195px;top:733px;" width="36" height="30" viewBox="0 0 36 30"><path d="M2 5 H12 L14 3 H30 V24 H2Z" fill="#e9cf7a"/>
<rect x="5" y="3" width="10" height="4" fill="#fff"/><rect x="6" y="4" width="3" height="2" fill="#2bb34a"/>
<rect x="13" y="5" width="10" height="4" fill="#fff"/><rect x="14" y="6" width="3" height="2" fill="#d03c3c"/>
<rect x="20" y="7" width="10" height="4" fill="#fff"/><rect x="25" y="8" width="3" height="2" fill="#2f8ad8"/>
<path d="M1 10 H33 V27 H1Z" fill="#f3e1a0"/>
<path d="M6 16 H28 V28 H23 V21 H11 V28 H6Z" fill="#7cc6ec" stroke="#4a9fd0" stroke-width="1"/></svg>
<svg class="a" style="left:255px;top:731px;" width="40" height="34" viewBox="0 0 40 34"><path d="M4 20 C2 12 10 6 20 6 C30 6 34 12 33 17 C32 21 27 21 26 24 C25 28 22 30 16 30 C9 30 5 25 4 20Z" fill="#cfe6f5" stroke="#7fb3d6" stroke-width="1"/>
<circle cx="10" cy="19" r="2.5" fill="#e43c3c"/><circle cx="15" cy="12" r="2.5" fill="#5cbf48"/><circle cx="22" cy="10" r="2.5" fill="#f5b92e"/><circle cx="17" cy="21" r="2" fill="#1a1a1a"/>
<path d="M20 32 L31 8" stroke="#e07f1c" stroke-width="2.6"/><path d="M31 8 L35 2 L37 4 L33 9Z" fill="#d9b07a"/></svg>
<svg class="a" style="left:1160px;top:738px;" width="120" height="22" viewBox="0 0 120 22"><path d="M5 12.5 L8.5 9 L12 12.5Z" fill="#dfe6ee"/>
<path d="M26 4 V18" stroke="#fff" stroke-width="1.2"/><path d="M27 4.5 H33 L34 6 H40 L38 8.5 L40 11 H34 L33 9.5 H27Z" fill="#fff"/>
<rect x="53" y="5" width="9" height="13" rx="1.5" fill="none" stroke="#fff" stroke-width="1.1"/><rect x="55.5" y="3.5" width="4" height="2" fill="#fff"/><rect x="55" y="8" width="5" height="8" fill="#fff"/>
<g fill="#fff"><rect x="74" y="14.5" width="2" height="2"/><rect x="77" y="12.5" width="2" height="4"/><rect x="80" y="10" width="2.2" height="6.5"/><rect x="83.5" y="7" width="2.3" height="9.5"/><rect x="87" y="4" width="2.5" height="12.5"/></g>
<path d="M98 9 H101 L105 5 V17 L101 13 H98Z" fill="#fff"/><path d="M107 8 Q109 11 107 14 M109.5 6 Q113 11 109.5 16" fill="none" stroke="#fff" stroke-width="1.1"/></svg>
<div class="t" style="left:1293.6px;top:734.78px;font-size:11.6px;line-height:11.6px;color:#ffffff;font-weight:normal;-webkit-text-stroke:0.25px #ffffff;">6:56 AM</div>
<div class="t" style="left:1290.4px;top:752.32px;font-size:11.44px;line-height:11.44px;color:#ffffff;font-weight:normal;-webkit-text-stroke:0.25px #ffffff;">7/20/2018</div>
<div class="a" style="left:1352px;top:729px;width:14px;height:38px;background:linear-gradient(90deg,#3a3a3a,#222 60%,#2e2e2e);border:1px solid #6a6a6a;border-right:none"></div>
</body></html>
